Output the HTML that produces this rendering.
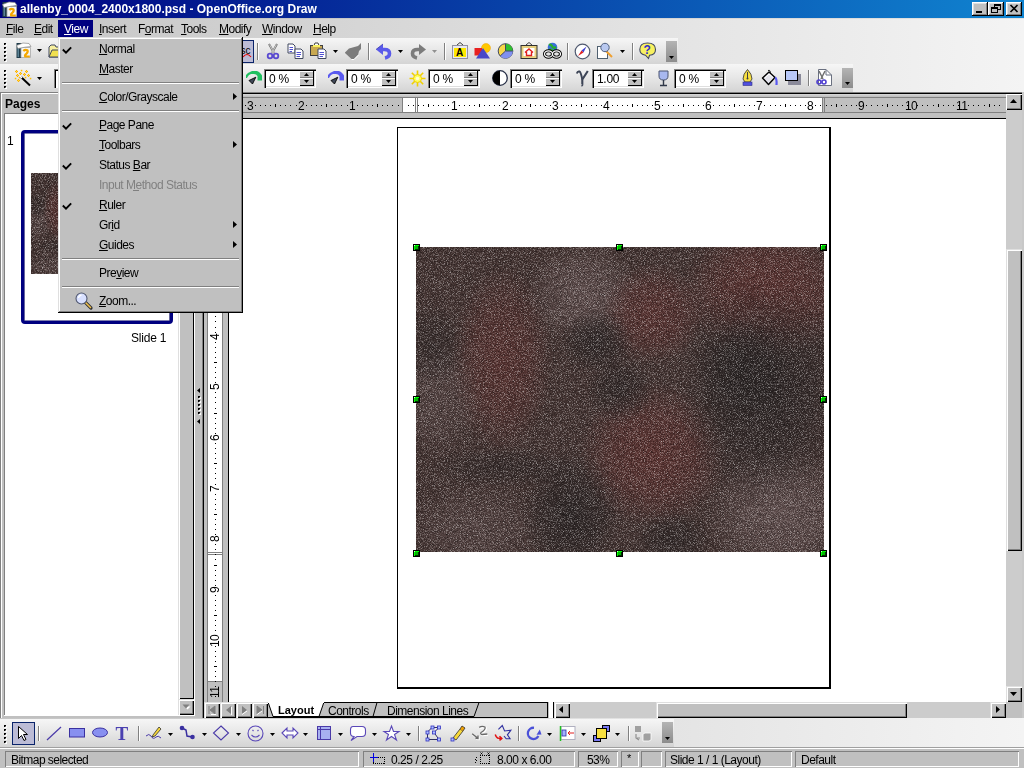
<!DOCTYPE html><html><head><meta charset="utf-8"><style>
html,body{margin:0;padding:0;}
body{width:1024px;height:768px;overflow:hidden;position:relative;background:#c0c0c0;font-family:"Liberation Sans",sans-serif;}
div{box-sizing:border-box;}
.t{position:absolute;white-space:nowrap;line-height:1;will-change:transform;}
.u{text-decoration:underline;text-underline-offset:1px;}
svg{position:absolute;overflow:visible;}
</style></head><body>

<div style="position:absolute;left:0px;top:0px;width:1024px;height:18px;background:linear-gradient(to right,#000080 0%,#1084d0 100%);"></div>
<svg style="left:1px;top:1px" width="17" height="17" viewBox="0 0 17 17"><rect x="1.5" y="1" width="5" height="15" fill="#203c4a"/><rect x="2.5" y="3" width="1.5" height="12" fill="#5a8294"/><path d="M6 5.5 H15.5 V15.5 H6 Z" fill="#f6f6f6" stroke="#a8a8a8" stroke-width="0.8"/><path d="M1.5 3.5 L8 1 L14 1.5 L16 4.5 L10 5.2 L3 6.5 Z" fill="#fff" stroke="#8a8a8a" stroke-width="0.7"/><path d="M8.3 9 Q10 7.3 12.3 8.2 Q13.5 10 11.2 12 Q9.3 13.3 10.3 14.5 H14.8" stroke="#f5a800" stroke-width="2.2" fill="none"/></svg>
<div class="t" style="left:20px;top:3px;font-size:12px;font-weight:700;color:#fff;letter-spacing:0px;">allenby_0004_2400x1800.psd - OpenOffice.org Draw</div>
<div style="position:absolute;left:972px;top:2px;width:16px;height:14px;background:#c0c0c0;box-shadow:inset -1px -1px 0 #000, inset 1px 1px 0 #fff, inset -2px -2px 0 #808080, inset 2px 2px 0 #dfdfdf;"></div>
<div style="position:absolute;left:988px;top:2px;width:16px;height:14px;background:#c0c0c0;box-shadow:inset -1px -1px 0 #000, inset 1px 1px 0 #fff, inset -2px -2px 0 #808080, inset 2px 2px 0 #dfdfdf;"></div>
<div style="position:absolute;left:1006px;top:2px;width:16px;height:14px;background:#c0c0c0;box-shadow:inset -1px -1px 0 #000, inset 1px 1px 0 #fff, inset -2px -2px 0 #808080, inset 2px 2px 0 #dfdfdf;"></div>
<div style="position:absolute;left:976px;top:11px;width:6px;height:2px;background:#000;"></div>
<svg style="left:991px;top:4px" width="10" height="10"><rect x="3.5" y="0.5" width="6" height="5" fill="none" stroke="#000"/><rect x="3" y="0" width="7" height="2" fill="#000"/><rect x="0.5" y="3.5" width="6" height="5" fill="#c0c0c0" stroke="#000"/><rect x="0" y="3" width="7" height="2" fill="#000"/></svg>
<svg style="left:1010px;top:5px" width="8" height="7"><path d="M0.5 0 L7.5 7 M7.5 0 L0.5 7" stroke="#000" stroke-width="1.6"/></svg>
<div style="position:absolute;left:0px;top:18px;width:1024px;height:74px;background:linear-gradient(to right,#c4c4c4 0%,#d6d6d6 35%,#e6e6e6 70%,#f4f4f4 100%);"></div>
<div style="position:absolute;left:0px;top:18px;width:1024px;height:1px;background:linear-gradient(to right,#b8b8b8,#e4e4e4);"></div>
<div style="position:absolute;left:58px;top:20px;width:35px;height:17px;background:#000080;"></div>
<div class="t" style="left:6px;top:23px;font-size:12px;font-weight:400;color:#000;letter-spacing:-0.5px;"><span class="u">F</span>ile</div>
<div class="t" style="left:34px;top:23px;font-size:12px;font-weight:400;color:#000;letter-spacing:-0.5px;"><span class="u">E</span>dit</div>
<div class="t" style="left:64px;top:23px;font-size:12px;font-weight:400;color:#fff;letter-spacing:-0.5px;"><span class="u">V</span>iew</div>
<div class="t" style="left:99px;top:23px;font-size:12px;font-weight:400;color:#000;letter-spacing:-0.5px;"><span class="u">I</span>nsert</div>
<div class="t" style="left:138px;top:23px;font-size:12px;font-weight:400;color:#000;letter-spacing:-0.5px;">F<span class="u">o</span>rmat</div>
<div class="t" style="left:181px;top:23px;font-size:12px;font-weight:400;color:#000;letter-spacing:-0.5px;"><span class="u">T</span>ools</div>
<div class="t" style="left:219px;top:23px;font-size:12px;font-weight:400;color:#000;letter-spacing:-0.5px;"><span class="u">M</span>odify</div>
<div class="t" style="left:262px;top:23px;font-size:12px;font-weight:400;color:#000;letter-spacing:-0.5px;"><span class="u">W</span>indow</div>
<div class="t" style="left:313px;top:23px;font-size:12px;font-weight:400;color:#000;letter-spacing:-0.5px;"><span class="u">H</span>elp</div>
<div style="position:absolute;left:0px;top:38px;width:678px;height:26px;background:linear-gradient(to bottom,#f6f6f6 0%,#e8e8e8 45%,#d4d4d4 100%);"></div>
<div style="position:absolute;left:0px;top:64px;width:853px;height:28px;background:linear-gradient(to bottom,#f6f6f6 0%,#e8e8e8 45%,#d4d4d4 100%);"></div>
<div style="position:absolute;left:5px;top:44px;width:2px;height:2px;background:#fff;"></div>
<div style="position:absolute;left:4px;top:43px;width:2px;height:2px;background:#000;"></div>
<div style="position:absolute;left:5px;top:44px;width:1px;height:1px;background:#707070;"></div>
<div style="position:absolute;left:5px;top:48px;width:2px;height:2px;background:#fff;"></div>
<div style="position:absolute;left:4px;top:47px;width:2px;height:2px;background:#000;"></div>
<div style="position:absolute;left:5px;top:48px;width:1px;height:1px;background:#707070;"></div>
<div style="position:absolute;left:5px;top:52px;width:2px;height:2px;background:#fff;"></div>
<div style="position:absolute;left:4px;top:51px;width:2px;height:2px;background:#000;"></div>
<div style="position:absolute;left:5px;top:52px;width:1px;height:1px;background:#707070;"></div>
<div style="position:absolute;left:5px;top:56px;width:2px;height:2px;background:#fff;"></div>
<div style="position:absolute;left:4px;top:55px;width:2px;height:2px;background:#000;"></div>
<div style="position:absolute;left:5px;top:56px;width:1px;height:1px;background:#707070;"></div>
<div style="position:absolute;left:5px;top:60px;width:2px;height:2px;background:#fff;"></div>
<div style="position:absolute;left:4px;top:59px;width:2px;height:2px;background:#000;"></div>
<div style="position:absolute;left:5px;top:60px;width:1px;height:1px;background:#707070;"></div>
<div style="position:absolute;left:5px;top:71px;width:2px;height:2px;background:#fff;"></div>
<div style="position:absolute;left:4px;top:70px;width:2px;height:2px;background:#000;"></div>
<div style="position:absolute;left:5px;top:71px;width:1px;height:1px;background:#707070;"></div>
<div style="position:absolute;left:5px;top:75px;width:2px;height:2px;background:#fff;"></div>
<div style="position:absolute;left:4px;top:74px;width:2px;height:2px;background:#000;"></div>
<div style="position:absolute;left:5px;top:75px;width:1px;height:1px;background:#707070;"></div>
<div style="position:absolute;left:5px;top:79px;width:2px;height:2px;background:#fff;"></div>
<div style="position:absolute;left:4px;top:78px;width:2px;height:2px;background:#000;"></div>
<div style="position:absolute;left:5px;top:79px;width:1px;height:1px;background:#707070;"></div>
<div style="position:absolute;left:5px;top:83px;width:2px;height:2px;background:#fff;"></div>
<div style="position:absolute;left:4px;top:82px;width:2px;height:2px;background:#000;"></div>
<div style="position:absolute;left:5px;top:83px;width:1px;height:1px;background:#707070;"></div>
<div style="position:absolute;left:5px;top:87px;width:2px;height:2px;background:#fff;"></div>
<div style="position:absolute;left:4px;top:86px;width:2px;height:2px;background:#000;"></div>
<div style="position:absolute;left:5px;top:87px;width:1px;height:1px;background:#707070;"></div>
<svg style="left:15px;top:42px" width="17" height="17" viewBox="0 0 17 17"><rect x="1.5" y="1" width="5" height="15" fill="#203c4a"/><rect x="2.5" y="3" width="1.5" height="12" fill="#5a8294"/><path d="M6 5.5 H15.5 V15.5 H6 Z" fill="#f6f6f6" stroke="#a8a8a8" stroke-width="0.8"/><path d="M1.5 3.5 L8 1 L14 1.5 L16 4.5 L10 5.2 L3 6.5 Z" fill="#fff" stroke="#8a8a8a" stroke-width="0.7"/><path d="M8.3 9 Q10 7.3 12.3 8.2 Q13.5 10 11.2 12 Q9.3 13.3 10.3 14.5 H14.8" stroke="#f5a800" stroke-width="2.2" fill="none"/></svg>
<svg style="left:37px;top:49px" width="5" height="3"><path d="M0 0 H5 L2.5 3 Z" fill="#000"/></svg>
<svg style="left:48px;top:44px" width="17" height="14" viewBox="0 0 17 14"><path d="M1 3 L3 1 H7 L8 3 H14 V13 H1 Z" fill="#f8f0a0" stroke="#404860" stroke-width="1"/>
<path d="M1 13 L4 6 H16 L13 13 Z" fill="#f0e050" stroke="#404860" stroke-width="1"/></svg>
<div style="position:absolute;left:226px;top:40px;width:28px;height:23px;background:#bcbcd6;border:1px solid #0a246a;"></div>
<svg style="left:242px;top:46px" width="11" height="12" viewBox="0 0 11 12"><text x="-1.5" y="7.5" font-family="Liberation Sans" font-size="10" font-weight="400" fill="#000">sc</text>
<path d="M1 11 Q5 6 9 11" stroke="#e00000" stroke-width="1.2" fill="none"/></svg>
<div style="position:absolute;left:257px;top:43px;width:1px;height:17px;background:#808080;"></div>
<div style="position:absolute;left:258px;top:43px;width:1px;height:17px;background:#fff;"></div>
<svg style="left:265px;top:43px" width="16" height="16" viewBox="0 0 16 16"><path d="M4 1 L9 10 M12 1 L7 10" stroke="#707070" stroke-width="2" fill="none"/>
<path d="M4.5 1.5 L9 10 M11.5 1.5 L7 10" stroke="#e0e0e0" stroke-width="0.8" fill="none"/>
<circle cx="5" cy="13" r="2.3" fill="none" stroke="#5a4ad0" stroke-width="1.8"/><circle cx="11" cy="13" r="2.3" fill="none" stroke="#5a4ad0" stroke-width="1.8"/></svg>
<svg style="left:287px;top:43px" width="18" height="16" viewBox="0 0 18 16"><path d="M1 1 H6 L8 3 V10 H1 Z" fill="#fff" stroke="#404860"/><path d="M2.5 4.5 H6 M2.5 6.5 H6 M2.5 8.5 H5" stroke="#5050d0"/>
<path d="M8 6 H14 L16 8 V15.5 H8 Z" fill="#fff" stroke="#404860"/><path d="M9.5 9.5 H14 M9.5 11.5 H14 M9.5 13.5 H13" stroke="#5050d0"/></svg>
<svg style="left:310px;top:42px" width="18" height="17" viewBox="0 0 18 17"><rect x="0.5" y="3.5" width="12" height="10" fill="#c8a850" stroke="#404040"/><path d="M4 3.5 L5 1 H8 L9 3.5 Z" fill="#fff" stroke="#404040"/><rect x="3" y="3" width="7" height="2" fill="#f8f060"/>
<path d="M8 7 H14 L16 9 V16.5 H8 Z" fill="#fff" stroke="#404860"/><path d="M9.5 10.5 H14 M9.5 12.5 H14 M9.5 14.5 H13" stroke="#5050d0"/></svg>
<svg style="left:333px;top:50px" width="5" height="3"><path d="M0 0 H5 L2.5 3 Z" fill="#000"/></svg>
<svg style="left:344px;top:43px" width="18" height="17" viewBox="0 0 18 17"><path d="M1 9.5 L5 5.5 L14 3 L17 0 L17 6 L15 8 L14 12 L10 16 L7.5 16 L1 10 Z" fill="#7c7c7c"/><path d="M7.5 16.5 L10 16.5 L14.5 12" stroke="#fff" stroke-width="1" fill="none"/></svg>
<div style="position:absolute;left:368px;top:43px;width:1px;height:17px;background:#808080;"></div>
<div style="position:absolute;left:369px;top:43px;width:1px;height:17px;background:#fff;"></div>
<svg style="left:375px;top:43px" width="18" height="17" viewBox="0 0 18 17"><path d="M1 6.5 L8 1 V12 Z" fill="#5a5aea"/><path d="M6 6.5 H9.5 Q14.5 6.5 14.5 10.5 Q14.5 14 10 15" stroke="#5a5aea" stroke-width="3.6" fill="none"/><path d="M1 6.5 L8 1" stroke="#3838b0" stroke-width="0.8"/></svg>
<svg style="left:398px;top:50px" width="5" height="3"><path d="M0 0 H5 L2.5 3 Z" fill="#000"/></svg>
<svg style="left:409px;top:43px" width="18" height="17" viewBox="0 0 18 17"><path d="M17 6.5 L10 1 V12 Z" fill="#7c7c7c"/><path d="M12 6.5 H8.5 Q3.5 6.5 3.5 10.5 Q3.5 14 8 15" stroke="#7c7c7c" stroke-width="3.6" fill="none"/></svg>
<svg style="left:432px;top:50px" width="5" height="3"><path d="M0 0 H5 L2.5 3 Z" fill="#909090"/></svg>
<div style="position:absolute;left:444px;top:43px;width:1px;height:17px;background:#808080;"></div>
<div style="position:absolute;left:445px;top:43px;width:1px;height:17px;background:#fff;"></div>
<svg style="left:451px;top:42px" width="18" height="18" viewBox="0 0 18 18"><path d="M6 3 L9 0.5 L12 3" stroke="#404040" fill="none"/><rect x="1.5" y="3.5" width="15" height="13" fill="#e8e8f0" stroke="#9090a0"/><rect x="3" y="6" width="12" height="9" fill="#ffe800"/><text x="5" y="14" font-family="Liberation Sans" font-size="10" font-weight="700" fill="#000">A</text></svg>
<svg style="left:474px;top:43px" width="18" height="16" viewBox="0 0 18 16"><circle cx="12" cy="5" r="4.5" fill="#ffc800" stroke="#f0a000" stroke-width="0.5"/><rect x="0.5" y="5" width="7.5" height="7.5" fill="#e82020"/><path d="M9 5 L16 15.5 H2 Z" fill="#4848c8"/></svg>
<svg style="left:497px;top:43px" width="18" height="16" viewBox="0 0 18 16"><circle cx="8.5" cy="8" r="7.3" fill="#f8d848" stroke="#404860"/><path d="M8.5 8 V0.7 A7.3 7.3 0 0 1 15.8 8 Z" fill="#30c030"/><path d="M8.5 8 H15.8 A7.3 7.3 0 0 1 3.2 13 Z" fill="#8090f0"/><path d="M8.5 0.7 V8 L3.2 13 M8.5 8 H15.8" stroke="#404860" fill="none"/></svg>
<svg style="left:520px;top:42px" width="18" height="17" viewBox="0 0 18 17"><path d="M6 3 L9 0.5 L12 3" stroke="#404040" fill="none"/><rect x="1" y="3.5" width="16" height="13" fill="#e8d080" stroke="#303030"/><rect x="3.5" y="6" width="11" height="8" fill="#fff"/><path d="M5 10.5 L9 7 L13 10.5 M6.5 10 V13.5 H11.5 V10" stroke="#e02020" stroke-width="1.4" fill="none"/></svg>
<svg style="left:543px;top:42px" width="20" height="17" viewBox="0 0 20 17"><circle cx="9.5" cy="5.5" r="4.8" fill="#3a70d8"/><path d="M6 3 Q8 2 9 4 Q10 7 13 5 M6 8 Q8 7 10 9" stroke="#28b028" stroke-width="2.2" fill="none"/><g fill="none"><ellipse cx="5.5" cy="12" rx="4" ry="3.2" stroke="#000" stroke-width="3"/><ellipse cx="13.5" cy="12" rx="4" ry="3.2" stroke="#000" stroke-width="3"/><ellipse cx="5.5" cy="12" rx="4" ry="3.2" stroke="#fff" stroke-width="1.2"/><ellipse cx="13.5" cy="12" rx="4" ry="3.2" stroke="#fff" stroke-width="1.2"/></g></svg>
<div style="position:absolute;left:567px;top:43px;width:1px;height:17px;background:#808080;"></div>
<div style="position:absolute;left:568px;top:43px;width:1px;height:17px;background:#fff;"></div>
<svg style="left:574px;top:43px" width="17" height="17" viewBox="0 0 17 17"><circle cx="8.5" cy="8.5" r="7.3" fill="#fff" stroke="#505a70" stroke-width="1.2"/><path d="M12.5 3.5 L9.5 9.5 L7.5 7.5 Z" fill="#4040d0"/><path d="M4 13 L7.5 7.5 L9.5 9.5 Z" fill="#e02020"/></svg>
<svg style="left:597px;top:42px" width="18" height="17" viewBox="0 0 18 17"><rect x="0.5" y="4.5" width="10" height="12" fill="#fff" stroke="#506070"/><path d="M9 9 L15 15" stroke="#f0a030" stroke-width="2"/><circle cx="8" cy="5.5" r="4.2" fill="#b8c8f0" stroke="#506080" stroke-width="1"/></svg>
<svg style="left:620px;top:50px" width="5" height="3"><path d="M0 0 H5 L2.5 3 Z" fill="#000"/></svg>
<div style="position:absolute;left:632px;top:43px;width:1px;height:17px;background:#808080;"></div>
<div style="position:absolute;left:633px;top:43px;width:1px;height:17px;background:#fff;"></div>
<svg style="left:639px;top:42px" width="18" height="18" viewBox="0 0 18 18"><path d="M8.5 1 Q16.5 1 16.5 7.5 Q16.5 13 10.5 13.3 L9.5 16.5 L6.5 13.2 Q0.8 12.3 0.8 7.5 Q0.8 1 8.5 1 Z" fill="#f8f060" stroke="#404860" stroke-width="1.1"/><text x="4.6" y="12" font-family="Liberation Sans" font-size="12" font-weight="700" fill="#3030c8">?</text></svg>
<div style="position:absolute;left:666px;top:41px;width:11px;height:21px;background:linear-gradient(to bottom,#b4b4b4,#8c8c8c);"></div>
<svg style="left:669px;top:56px" width="5" height="3" viewBox="0 0 5 3"><path d="M0 0 H5 L2.5 3 Z" fill="#000"/></svg>
<svg style="left:14px;top:69px" width="18" height="18" viewBox="0 0 18 18"><path d="M2.5 1 V4 M1 2.5 H4" stroke="#ffb000" stroke-width="1.2"/><rect x="2" y="2" width="1" height="1" fill="#ffe040"/><path d="M12.5 1 V4 M11 2.5 H14" stroke="#ffb000" stroke-width="1.2"/><rect x="12" y="2" width="1" height="1" fill="#ffe040"/><path d="M6.5 3 V6 M5 4.5 H8" stroke="#ffb000" stroke-width="1.2"/><rect x="6" y="4" width="1" height="1" fill="#ffe040"/><path d="M10.5 4 V7 M9 5.5 H12" stroke="#ffb000" stroke-width="1.2"/><rect x="10" y="5" width="1" height="1" fill="#ffe040"/><path d="M3.5 5 V8 M2 6.5 H5" stroke="#ffb000" stroke-width="1.2"/><rect x="3" y="6" width="1" height="1" fill="#ffe040"/><path d="M14.5 5 V8 M13 6.5 H16" stroke="#ffb000" stroke-width="1.2"/><rect x="14" y="6" width="1" height="1" fill="#ffe040"/><path d="M4.5 10 V13 M3 11.5 H6" stroke="#ffb000" stroke-width="1.2"/><rect x="4" y="11" width="1" height="1" fill="#ffe040"/><rect x="6.8" y="0.8" width="1.5" height="1.5" fill="#ffc000"/><rect x="4.8" y="7.8" width="1.5" height="1.5" fill="#ffc000"/><rect x="10.8" y="7.8" width="1.5" height="1.5" fill="#ffc000"/><rect x="0.8" y="8.8" width="1.5" height="1.5" fill="#ffc000"/><rect x="15.8" y="8.8" width="1.5" height="1.5" fill="#ffc000"/><path d="M7 8 L16 16.5" stroke="#000" stroke-width="2"/><path d="M6.3 7.3 L8 9" stroke="#fff" stroke-width="1.5"/></svg>
<svg style="left:37px;top:77px" width="5" height="3"><path d="M0 0 H5 L2.5 3 Z" fill="#000"/></svg>
<div style="position:absolute;left:54px;top:69px;width:20px;height:19px;background:#fff;box-shadow:inset 1px 1px 0 #808080, inset 2px 2px 0 #000;"></div>
<div style="position:absolute;left:264px;top:69px;width:52px;height:19px;background:#fff;box-shadow:inset 1px 1px 0 #808080, inset 2px 2px 0 #000, inset -1px -1px 0 #fff, inset -2px -2px 0 #dfdfdf;"></div>
<div class="t" style="left:269px;top:73px;font-size:12px;font-weight:400;color:#000;letter-spacing:-0.3px;">0 %</div>
<div style="position:absolute;left:299px;top:71px;width:15px;height:7px;background:#c0c0c0;box-shadow:inset 1px 1px 0 #fff, inset -1px -1px 0 #808080;"></div>
<div style="position:absolute;left:299px;top:78px;width:15px;height:8px;background:#c0c0c0;box-shadow:inset 1px 1px 0 #fff, inset -1px -1px 0 #000;"></div>
<div style="position:absolute;left:313px;top:70px;width:1px;height:16px;background:#000;"></div>
<svg style="left:304px;top:73px" width="5" height="3" viewBox="0 0 5 3"><path d="M2.5 0 L5 3 H0 Z" fill="#000"/></svg>
<svg style="left:304px;top:80px" width="5" height="3" viewBox="0 0 5 3"><path d="M0 0 H5 L2.5 3 Z" fill="#000"/></svg>
<div style="position:absolute;left:346px;top:69px;width:52px;height:19px;background:#fff;box-shadow:inset 1px 1px 0 #808080, inset 2px 2px 0 #000, inset -1px -1px 0 #fff, inset -2px -2px 0 #dfdfdf;"></div>
<div class="t" style="left:351px;top:73px;font-size:12px;font-weight:400;color:#000;letter-spacing:-0.3px;">0 %</div>
<div style="position:absolute;left:381px;top:71px;width:15px;height:7px;background:#c0c0c0;box-shadow:inset 1px 1px 0 #fff, inset -1px -1px 0 #808080;"></div>
<div style="position:absolute;left:381px;top:78px;width:15px;height:8px;background:#c0c0c0;box-shadow:inset 1px 1px 0 #fff, inset -1px -1px 0 #000;"></div>
<div style="position:absolute;left:395px;top:70px;width:1px;height:16px;background:#000;"></div>
<svg style="left:386px;top:73px" width="5" height="3" viewBox="0 0 5 3"><path d="M2.5 0 L5 3 H0 Z" fill="#000"/></svg>
<svg style="left:386px;top:80px" width="5" height="3" viewBox="0 0 5 3"><path d="M0 0 H5 L2.5 3 Z" fill="#000"/></svg>
<div style="position:absolute;left:428px;top:69px;width:52px;height:19px;background:#fff;box-shadow:inset 1px 1px 0 #808080, inset 2px 2px 0 #000, inset -1px -1px 0 #fff, inset -2px -2px 0 #dfdfdf;"></div>
<div class="t" style="left:433px;top:73px;font-size:12px;font-weight:400;color:#000;letter-spacing:-0.3px;">0 %</div>
<div style="position:absolute;left:463px;top:71px;width:15px;height:7px;background:#c0c0c0;box-shadow:inset 1px 1px 0 #fff, inset -1px -1px 0 #808080;"></div>
<div style="position:absolute;left:463px;top:78px;width:15px;height:8px;background:#c0c0c0;box-shadow:inset 1px 1px 0 #fff, inset -1px -1px 0 #000;"></div>
<div style="position:absolute;left:477px;top:70px;width:1px;height:16px;background:#000;"></div>
<svg style="left:468px;top:73px" width="5" height="3" viewBox="0 0 5 3"><path d="M2.5 0 L5 3 H0 Z" fill="#000"/></svg>
<svg style="left:468px;top:80px" width="5" height="3" viewBox="0 0 5 3"><path d="M0 0 H5 L2.5 3 Z" fill="#000"/></svg>
<div style="position:absolute;left:510px;top:69px;width:52px;height:19px;background:#fff;box-shadow:inset 1px 1px 0 #808080, inset 2px 2px 0 #000, inset -1px -1px 0 #fff, inset -2px -2px 0 #dfdfdf;"></div>
<div class="t" style="left:515px;top:73px;font-size:12px;font-weight:400;color:#000;letter-spacing:-0.3px;">0 %</div>
<div style="position:absolute;left:545px;top:71px;width:15px;height:7px;background:#c0c0c0;box-shadow:inset 1px 1px 0 #fff, inset -1px -1px 0 #808080;"></div>
<div style="position:absolute;left:545px;top:78px;width:15px;height:8px;background:#c0c0c0;box-shadow:inset 1px 1px 0 #fff, inset -1px -1px 0 #000;"></div>
<div style="position:absolute;left:559px;top:70px;width:1px;height:16px;background:#000;"></div>
<svg style="left:550px;top:73px" width="5" height="3" viewBox="0 0 5 3"><path d="M2.5 0 L5 3 H0 Z" fill="#000"/></svg>
<svg style="left:550px;top:80px" width="5" height="3" viewBox="0 0 5 3"><path d="M0 0 H5 L2.5 3 Z" fill="#000"/></svg>
<div style="position:absolute;left:592px;top:69px;width:52px;height:19px;background:#fff;box-shadow:inset 1px 1px 0 #808080, inset 2px 2px 0 #000, inset -1px -1px 0 #fff, inset -2px -2px 0 #dfdfdf;"></div>
<div class="t" style="left:597px;top:73px;font-size:12px;font-weight:400;color:#000;letter-spacing:-0.3px;">1.00</div>
<div style="position:absolute;left:627px;top:71px;width:15px;height:7px;background:#c0c0c0;box-shadow:inset 1px 1px 0 #fff, inset -1px -1px 0 #808080;"></div>
<div style="position:absolute;left:627px;top:78px;width:15px;height:8px;background:#c0c0c0;box-shadow:inset 1px 1px 0 #fff, inset -1px -1px 0 #000;"></div>
<div style="position:absolute;left:641px;top:70px;width:1px;height:16px;background:#000;"></div>
<svg style="left:632px;top:73px" width="5" height="3" viewBox="0 0 5 3"><path d="M2.5 0 L5 3 H0 Z" fill="#000"/></svg>
<svg style="left:632px;top:80px" width="5" height="3" viewBox="0 0 5 3"><path d="M0 0 H5 L2.5 3 Z" fill="#000"/></svg>
<div style="position:absolute;left:674px;top:69px;width:52px;height:19px;background:#fff;box-shadow:inset 1px 1px 0 #808080, inset 2px 2px 0 #000, inset -1px -1px 0 #fff, inset -2px -2px 0 #dfdfdf;"></div>
<div class="t" style="left:679px;top:73px;font-size:12px;font-weight:400;color:#000;letter-spacing:-0.3px;">0 %</div>
<div style="position:absolute;left:709px;top:71px;width:15px;height:7px;background:#c0c0c0;box-shadow:inset 1px 1px 0 #fff, inset -1px -1px 0 #808080;"></div>
<div style="position:absolute;left:709px;top:78px;width:15px;height:8px;background:#c0c0c0;box-shadow:inset 1px 1px 0 #fff, inset -1px -1px 0 #000;"></div>
<div style="position:absolute;left:723px;top:70px;width:1px;height:16px;background:#000;"></div>
<svg style="left:714px;top:73px" width="5" height="3" viewBox="0 0 5 3"><path d="M2.5 0 L5 3 H0 Z" fill="#000"/></svg>
<svg style="left:714px;top:80px" width="5" height="3" viewBox="0 0 5 3"><path d="M0 0 H5 L2.5 3 Z" fill="#000"/></svg>
<svg style="left:242px;top:66px" width="24" height="24" viewBox="0 0 24 24"><path d="M4 12 L4 9 L6 7 L8 6 L10 5 L15 5 L17 6 L19 8 L20 9.5 L20 14.5 L15.5 14.5 L15.5 10 L14 8.5 L12 8 L9 8 L7 9 L5.5 11 L5 12 Z" fill="#20c060"/>
<path d="M7 14.5 L13.8 11.2 L10.5 18 Z" fill="#404858" stroke="#000" stroke-width="0.9" stroke-linejoin="round"/></svg>
<svg style="left:324px;top:66px" width="24" height="24" viewBox="0 0 24 24"><path d="M4 12 L4 9 L6 7 L8 6 L10 5 L15 5 L17 6 L19 8 L20 9.5 L20 14.5 L15.5 14.5 L15.5 10 L14 8.5 L12 8 L9 8 L7 9 L5.5 11 L5 12 Z" fill="#5a5af0"/>
<path d="M7 14.5 L13.8 11.2 L10.5 18 Z" fill="#404858" stroke="#000" stroke-width="0.9" stroke-linejoin="round"/></svg>
<svg style="left:409px;top:70px" width="17" height="17" viewBox="0 0 17 17"><g stroke="#f0d000" stroke-width="1.6"><path d="M8.5 0.5 V16.5 M0.5 8.5 H16.5 M2.8 2.8 L14.2 14.2 M14.2 2.8 L2.8 14.2"/></g><circle cx="8.5" cy="8.5" r="4" fill="#ffff60" stroke="#f0d000"/><circle cx="8.5" cy="8.5" r="1.8" fill="#ffffd0"/></svg>
<svg style="left:491px;top:69px" width="18" height="18" viewBox="0 0 18 18"><circle cx="9" cy="9" r="7.3" fill="#fff" stroke="#283048" stroke-width="1.3"/><path d="M9 1.7 A7.3 7.3 0 0 0 9 16.3 Z" fill="#000"/></svg>
<svg style="left:576px;top:69px" width="13" height="18" viewBox="0 0 13 18"><path d="M0.8 4.5 Q1.5 2 3.5 2.5 Q4.8 3 6.3 10.5" stroke="#3c4456" stroke-width="1.9" fill="none"/><path d="M11.8 2 L6.3 10.5 V15.2 Q6.3 16.8 5.6 16.2" stroke="#3c4456" stroke-width="2.1" fill="none"/></svg>
<svg style="left:658px;top:70px" width="11" height="17" viewBox="0 0 11 17"><path d="M1 1 H10 V6 Q10 10 5.5 10 Q1 10 1 6 Z" fill="#a8b8f0" stroke="#4a5470"/><path d="M5.5 10 V15 M2 15.5 H9" stroke="#303848" stroke-width="1.4"/></svg>
<svg style="left:741px;top:69px" width="13" height="18" viewBox="0 0 13 18"><path d="M6.5 0.5 Q11 5 11 10 L9 13 H4 L2 10 Q2 5 6.5 0.5 Z" fill="#f8e040" stroke="#404040" stroke-width="0.9"/><path d="M6.5 3 V9" stroke="#404040"/><circle cx="6.5" cy="9.5" r="1" fill="#404040"/><rect x="2" y="13" width="9" height="3.5" fill="#5050e0" stroke="#303080" stroke-width="0.6"/></svg>
<svg style="left:761px;top:69px" width="18" height="18" viewBox="0 0 18 18"><path d="M7 1.5 Q10 0.5 9 5" stroke="#202020" stroke-width="1" fill="none"/><path d="M1.5 9 L8 3 L14 8.5 L7.5 15.5 Z" fill="#e4e4ec" stroke="#000" stroke-width="1.4" stroke-linejoin="round"/><path d="M4 9 L8 5 L12 8.5" fill="none" stroke="#fff" stroke-width="1"/><path d="M14 8.5 Q16 9.5 15.5 16" stroke="#5a5af0" stroke-width="2.2" fill="none"/></svg>
<svg style="left:785px;top:70px" width="17" height="16" viewBox="0 0 17 16"><rect x="3" y="4" width="13" height="11" fill="#8a8a9a"/><rect x="0.5" y="0.5" width="12" height="10" fill="#b8c8f8" stroke="#000"/></svg>
<div style="position:absolute;left:808px;top:70px;width:1px;height:16px;background:#808080;"></div>
<div style="position:absolute;left:809px;top:70px;width:1px;height:16px;background:#fff;"></div>
<svg style="left:815px;top:69px" width="18" height="18" viewBox="0 0 18 18"><path d="M3.5 0.5 H11 L16.5 6 V16.5 H3.5 Z" fill="#fff" stroke="#6a7080"/><path d="M11 0.5 V6 H16.5" fill="none" stroke="#6a7080"/>
<path d="M4 2 L8 10 M10 2 L6 10" stroke="#707070" stroke-width="1.5"/><circle cx="4" cy="13" r="2" fill="none" stroke="#5040d0" stroke-width="1.6"/><circle cx="9" cy="13" r="2" fill="none" stroke="#5040d0" stroke-width="1.6"/></svg>
<div style="position:absolute;left:842px;top:68px;width:11px;height:20px;background:linear-gradient(to bottom,#b4b4b4,#8c8c8c);"></div>
<svg style="left:845px;top:82px" width="5" height="3" viewBox="0 0 5 3"><path d="M0 0 H5 L2.5 3 Z" fill="#000"/></svg>
<div style="position:absolute;left:0px;top:92px;width:203px;height:627px;background:#c0c0c0;"></div>
<div style="position:absolute;left:0px;top:92px;width:195px;height:1px;background:#808080;"></div>
<div style="position:absolute;left:0px;top:92px;width:1px;height:627px;background:#808080;"></div>
<div style="position:absolute;left:1px;top:93px;width:194px;height:1px;background:#fff;"></div>
<div style="position:absolute;left:1px;top:93px;width:1px;height:625px;background:#fff;"></div>
<div class="t" style="left:5px;top:98px;font-size:12px;font-weight:700;color:#000;letter-spacing:0px;">Pages</div>
<div style="position:absolute;left:4px;top:113px;width:191px;height:603px;background:#fff;box-shadow:inset 1px 1px 0 #808080;"></div>
<div style="position:absolute;left:4px;top:715px;width:191px;height:1px;background:#fff;"></div>
<div style="position:absolute;left:194px;top:113px;width:1px;height:603px;background:#fff;"></div>
<div style="position:absolute;left:0px;top:718px;width:203px;height:1px;background:#808080;"></div>
<div style="position:absolute;left:178px;top:114px;width:16px;height:585px;background:#c0c0c0;box-shadow:inset 1px 1px 0 #dfdfdf, inset 2px 2px 0 #fff, inset -1px -1px 0 #000;"></div>
<div style="position:absolute;left:178px;top:699px;width:16px;height:16px;background:#c0c0c0;box-shadow:inset 1px 1px 0 #dfdfdf, inset 2px 2px 0 #fff, inset -1px -1px 0 #000, inset -2px -2px 0 #808080;"></div>
<svg style="left:182px;top:704px" width="9" height="6" viewBox="0 0 9 6"><path d="M1.5 1.5 H7.5 L4.5 4.5 Z" fill="#fff" transform="translate(1,1)"/><path d="M0.5 0.5 H7.5 L4 4.5 Z" fill="#808080"/></svg>
<div class="t" style="left:7px;top:135px;font-size:12px;font-weight:400;color:#000;letter-spacing:0px;">1</div>
<div style="position:absolute;left:21px;top:130px;width:152px;height:194px;border:3px solid #000080;border-radius:4px;background:#fff;box-shadow:inset 0 0 0 0.6px #000060;"></div>
<svg style="left:31px;top:173px" width="135" height="101" viewBox="0 0 135 101"><defs><radialGradient id="gr2"><stop offset="0" stop-color="#643432" stop-opacity="0.75"/><stop offset="0.55" stop-color="#643432" stop-opacity="0.5"/><stop offset="1" stop-color="#643432" stop-opacity="0"/></radialGradient><radialGradient id="gl2"><stop offset="0" stop-color="#726060" stop-opacity="0.7"/><stop offset="0.55" stop-color="#726060" stop-opacity="0.45"/><stop offset="1" stop-color="#726060" stop-opacity="0"/></radialGradient><radialGradient id="gd2"><stop offset="0" stop-color="#2a2525" stop-opacity="0.8"/><stop offset="0.55" stop-color="#2a2525" stop-opacity="0.5"/><stop offset="1" stop-color="#2a2525" stop-opacity="0"/></radialGradient><filter id="nz2" filterUnits="userSpaceOnUse" x="0" y="0" width="135" height="101" color-interpolation-filters="sRGB"><feTurbulence type="fractalNoise" baseFrequency="1.3" numOctaves="2" seed="3" result="t"/><feColorMatrix in="t" type="matrix" values="1 0 0 0 0  1 0 0 0 0  1 0 0 0 0  0 0 0 0 1" result="g"/><feComponentTransfer in="g" result="gc"><feFuncR type="linear" slope="0.72" intercept="0.14"/><feFuncG type="linear" slope="0.72" intercept="0.14"/><feFuncB type="linear" slope="0.72" intercept="0.14"/></feComponentTransfer><feBlend in="gc" in2="SourceGraphic" mode="hard-light"/></filter></defs><g filter="url(#nz2)"><g transform="scale(0.3309)"><rect width="408" height="305" fill="#443432"/><ellipse cx="86" cy="113" rx="51" ry="94" fill="url(#gr2)" opacity="0.85"/><ellipse cx="167" cy="46" rx="57" ry="51" fill="url(#gl2)" opacity="0.85"/><ellipse cx="237" cy="67" rx="51" ry="51" fill="url(#gr2)" opacity="0.9"/><ellipse cx="351" cy="43" rx="86" ry="68" fill="url(#gr2)" opacity="1.0"/><ellipse cx="20" cy="152" rx="46" ry="60" fill="url(#gl2)" opacity="0.5"/><ellipse cx="237" cy="207" rx="74" ry="73" fill="url(#gr2)" opacity="1.0"/><ellipse cx="367" cy="268" rx="80" ry="64" fill="url(#gl2)" opacity="0.9"/><ellipse cx="61" cy="281" rx="69" ry="43" fill="url(#gl2)" opacity="0.5"/><ellipse cx="180" cy="95" rx="37" ry="32" fill="url(#gd2)" opacity="0.9"/><ellipse cx="347" cy="143" rx="86" ry="111" fill="url(#gd2)" opacity="1.0"/><ellipse cx="326" cy="122" rx="46" ry="51" fill="url(#gd2)" opacity="0.8"/><ellipse cx="204" cy="143" rx="34" ry="34" fill="url(#gd2)" opacity="0.8"/><ellipse cx="155" cy="268" rx="51" ry="64" fill="url(#gd2)" opacity="1.0"/><ellipse cx="257" cy="293" rx="40" ry="30" fill="url(#gd2)" opacity="0.8"/><ellipse cx="16" cy="98" rx="34" ry="43" fill="url(#gd2)" opacity="0.6"/><ellipse cx="90" cy="220" rx="80" ry="21" fill="url(#gd2)" opacity="0.6"/></g></g></svg>
<div class="t" style="left:131px;top:332px;font-size:12px;font-weight:400;color:#000;letter-spacing:-0.2px;">Slide 1</div>
<div style="position:absolute;left:195px;top:93px;width:8px;height:626px;background:#c0c0c0;"></div>
<div style="position:absolute;left:199px;top:397px;width:2px;height:2px;background:#fff;"></div>
<div style="position:absolute;left:198px;top:396px;width:2px;height:2px;background:#000;"></div>
<div style="position:absolute;left:199px;top:397px;width:1px;height:1px;background:#606060;"></div>
<div style="position:absolute;left:199px;top:401px;width:2px;height:2px;background:#fff;"></div>
<div style="position:absolute;left:198px;top:400px;width:2px;height:2px;background:#000;"></div>
<div style="position:absolute;left:199px;top:401px;width:1px;height:1px;background:#606060;"></div>
<div style="position:absolute;left:199px;top:405px;width:2px;height:2px;background:#fff;"></div>
<div style="position:absolute;left:198px;top:404px;width:2px;height:2px;background:#000;"></div>
<div style="position:absolute;left:199px;top:405px;width:1px;height:1px;background:#606060;"></div>
<div style="position:absolute;left:199px;top:409px;width:2px;height:2px;background:#fff;"></div>
<div style="position:absolute;left:198px;top:408px;width:2px;height:2px;background:#000;"></div>
<div style="position:absolute;left:199px;top:409px;width:1px;height:1px;background:#606060;"></div>
<div style="position:absolute;left:199px;top:413px;width:2px;height:2px;background:#fff;"></div>
<div style="position:absolute;left:198px;top:412px;width:2px;height:2px;background:#000;"></div>
<div style="position:absolute;left:199px;top:413px;width:1px;height:1px;background:#606060;"></div>
<svg style="left:197px;top:388px" width="4" height="5" viewBox="0 0 4 5"><path d="M3 0 V5 L0 2.5 Z" fill="#000"/></svg>
<svg style="left:197px;top:419px" width="4" height="5" viewBox="0 0 4 5"><path d="M3 0 V5 L0 2.5 Z" fill="#000"/></svg>
<div style="position:absolute;left:203px;top:92px;width:821px;height:1px;background:#808080;"></div>
<div style="position:absolute;left:203px;top:93px;width:819px;height:1px;background:#000;"></div>
<div style="position:absolute;left:203px;top:93px;width:1px;height:625px;background:#000;"></div>
<div style="position:absolute;left:202px;top:92px;width:1px;height:627px;background:#808080;"></div>
<div style="position:absolute;left:229px;top:119px;width:777px;height:583px;background:#fff;"></div>
<div style="position:absolute;left:204px;top:94px;width:802px;height:25px;background:#c0c0c0;"></div>
<div style="position:absolute;left:204px;top:94px;width:802px;height:1px;background:#d4d4d4;"></div>
<div style="position:absolute;left:204px;top:95px;width:802px;height:1px;background:#cacaca;"></div>
<div style="position:absolute;left:229px;top:97px;width:777px;height:1px;background:#808080;"></div>
<div style="position:absolute;left:229px;top:112px;width:777px;height:1px;background:#808080;"></div>
<div style="position:absolute;left:204px;top:118px;width:802px;height:1px;background:#000;"></div>
<div style="position:absolute;left:403px;top:98px;width:420px;height:14px;background:#fff;"></div>
<div style="position:absolute;left:402px;top:97px;width:1px;height:16px;background:#808080;"></div>
<div style="position:absolute;left:824px;top:97px;width:1px;height:16px;background:#808080;"></div>
<div style="position:absolute;left:415px;top:98px;width:1px;height:14px;background:#808080;"></div>
<div style="position:absolute;left:417px;top:98px;width:1px;height:14px;background:#808080;"></div>
<div style="position:absolute;left:822px;top:98px;width:1px;height:14px;background:#808080;"></div>
<div style="position:absolute;left:234px;top:105px;width:1px;height:1px;background:#000;"></div>
<div style="position:absolute;left:240px;top:105px;width:1px;height:1px;background:#000;"></div>
<div style="position:absolute;left:245px;top:105px;width:1px;height:1px;background:#000;"></div>
<div class="t" style="left:247px;top:100px;font-size:12px;font-weight:400;color:#000;letter-spacing:-0.6px;">3</div>
<div style="position:absolute;left:255px;top:105px;width:1px;height:1px;background:#000;"></div>
<div style="position:absolute;left:260px;top:105px;width:1px;height:1px;background:#000;"></div>
<div style="position:absolute;left:265px;top:105px;width:1px;height:1px;background:#000;"></div>
<div style="position:absolute;left:270px;top:105px;width:1px;height:1px;background:#000;"></div>
<div style="position:absolute;left:275px;top:104px;width:1px;height:3px;background:#000;"></div>
<div style="position:absolute;left:280px;top:105px;width:1px;height:1px;background:#000;"></div>
<div style="position:absolute;left:285px;top:105px;width:1px;height:1px;background:#000;"></div>
<div style="position:absolute;left:290px;top:105px;width:1px;height:1px;background:#000;"></div>
<div style="position:absolute;left:296px;top:105px;width:1px;height:1px;background:#000;"></div>
<div class="t" style="left:298px;top:100px;font-size:12px;font-weight:400;color:#000;letter-spacing:-0.6px;">2</div>
<div style="position:absolute;left:306px;top:105px;width:1px;height:1px;background:#000;"></div>
<div style="position:absolute;left:311px;top:105px;width:1px;height:1px;background:#000;"></div>
<div style="position:absolute;left:316px;top:105px;width:1px;height:1px;background:#000;"></div>
<div style="position:absolute;left:321px;top:105px;width:1px;height:1px;background:#000;"></div>
<div style="position:absolute;left:326px;top:104px;width:1px;height:3px;background:#000;"></div>
<div style="position:absolute;left:331px;top:105px;width:1px;height:1px;background:#000;"></div>
<div style="position:absolute;left:336px;top:105px;width:1px;height:1px;background:#000;"></div>
<div style="position:absolute;left:341px;top:105px;width:1px;height:1px;background:#000;"></div>
<div style="position:absolute;left:347px;top:105px;width:1px;height:1px;background:#000;"></div>
<div class="t" style="left:349px;top:100px;font-size:12px;font-weight:400;color:#000;letter-spacing:-0.6px;">1</div>
<div style="position:absolute;left:357px;top:105px;width:1px;height:1px;background:#000;"></div>
<div style="position:absolute;left:362px;top:105px;width:1px;height:1px;background:#000;"></div>
<div style="position:absolute;left:367px;top:105px;width:1px;height:1px;background:#000;"></div>
<div style="position:absolute;left:372px;top:105px;width:1px;height:1px;background:#000;"></div>
<div style="position:absolute;left:377px;top:104px;width:1px;height:3px;background:#000;"></div>
<div style="position:absolute;left:382px;top:105px;width:1px;height:1px;background:#000;"></div>
<div style="position:absolute;left:387px;top:105px;width:1px;height:1px;background:#000;"></div>
<div style="position:absolute;left:392px;top:105px;width:1px;height:1px;background:#000;"></div>
<div style="position:absolute;left:398px;top:105px;width:1px;height:1px;background:#000;"></div>
<div style="position:absolute;left:408px;top:105px;width:1px;height:1px;background:#000;"></div>
<div style="position:absolute;left:413px;top:105px;width:1px;height:1px;background:#000;"></div>
<div style="position:absolute;left:418px;top:105px;width:1px;height:1px;background:#000;"></div>
<div style="position:absolute;left:423px;top:105px;width:1px;height:1px;background:#000;"></div>
<div style="position:absolute;left:428px;top:104px;width:1px;height:3px;background:#000;"></div>
<div style="position:absolute;left:433px;top:105px;width:1px;height:1px;background:#000;"></div>
<div style="position:absolute;left:438px;top:105px;width:1px;height:1px;background:#000;"></div>
<div style="position:absolute;left:443px;top:105px;width:1px;height:1px;background:#000;"></div>
<div style="position:absolute;left:448px;top:105px;width:1px;height:1px;background:#000;"></div>
<div class="t" style="left:451px;top:100px;font-size:12px;font-weight:400;color:#000;letter-spacing:-0.6px;">1</div>
<div style="position:absolute;left:459px;top:105px;width:1px;height:1px;background:#000;"></div>
<div style="position:absolute;left:464px;top:105px;width:1px;height:1px;background:#000;"></div>
<div style="position:absolute;left:469px;top:105px;width:1px;height:1px;background:#000;"></div>
<div style="position:absolute;left:474px;top:105px;width:1px;height:1px;background:#000;"></div>
<div style="position:absolute;left:479px;top:104px;width:1px;height:3px;background:#000;"></div>
<div style="position:absolute;left:484px;top:105px;width:1px;height:1px;background:#000;"></div>
<div style="position:absolute;left:489px;top:105px;width:1px;height:1px;background:#000;"></div>
<div style="position:absolute;left:494px;top:105px;width:1px;height:1px;background:#000;"></div>
<div style="position:absolute;left:499px;top:105px;width:1px;height:1px;background:#000;"></div>
<div class="t" style="left:502px;top:100px;font-size:12px;font-weight:400;color:#000;letter-spacing:-0.6px;">2</div>
<div style="position:absolute;left:510px;top:105px;width:1px;height:1px;background:#000;"></div>
<div style="position:absolute;left:515px;top:105px;width:1px;height:1px;background:#000;"></div>
<div style="position:absolute;left:520px;top:105px;width:1px;height:1px;background:#000;"></div>
<div style="position:absolute;left:525px;top:105px;width:1px;height:1px;background:#000;"></div>
<div style="position:absolute;left:530px;top:104px;width:1px;height:3px;background:#000;"></div>
<div style="position:absolute;left:535px;top:105px;width:1px;height:1px;background:#000;"></div>
<div style="position:absolute;left:540px;top:105px;width:1px;height:1px;background:#000;"></div>
<div style="position:absolute;left:545px;top:105px;width:1px;height:1px;background:#000;"></div>
<div style="position:absolute;left:550px;top:105px;width:1px;height:1px;background:#000;"></div>
<div class="t" style="left:552px;top:100px;font-size:12px;font-weight:400;color:#000;letter-spacing:-0.6px;">3</div>
<div style="position:absolute;left:561px;top:105px;width:1px;height:1px;background:#000;"></div>
<div style="position:absolute;left:566px;top:105px;width:1px;height:1px;background:#000;"></div>
<div style="position:absolute;left:571px;top:105px;width:1px;height:1px;background:#000;"></div>
<div style="position:absolute;left:576px;top:105px;width:1px;height:1px;background:#000;"></div>
<div style="position:absolute;left:581px;top:104px;width:1px;height:3px;background:#000;"></div>
<div style="position:absolute;left:586px;top:105px;width:1px;height:1px;background:#000;"></div>
<div style="position:absolute;left:591px;top:105px;width:1px;height:1px;background:#000;"></div>
<div style="position:absolute;left:596px;top:105px;width:1px;height:1px;background:#000;"></div>
<div style="position:absolute;left:601px;top:105px;width:1px;height:1px;background:#000;"></div>
<div class="t" style="left:603px;top:100px;font-size:12px;font-weight:400;color:#000;letter-spacing:-0.6px;">4</div>
<div style="position:absolute;left:612px;top:105px;width:1px;height:1px;background:#000;"></div>
<div style="position:absolute;left:617px;top:105px;width:1px;height:1px;background:#000;"></div>
<div style="position:absolute;left:622px;top:105px;width:1px;height:1px;background:#000;"></div>
<div style="position:absolute;left:627px;top:105px;width:1px;height:1px;background:#000;"></div>
<div style="position:absolute;left:632px;top:104px;width:1px;height:3px;background:#000;"></div>
<div style="position:absolute;left:637px;top:105px;width:1px;height:1px;background:#000;"></div>
<div style="position:absolute;left:642px;top:105px;width:1px;height:1px;background:#000;"></div>
<div style="position:absolute;left:647px;top:105px;width:1px;height:1px;background:#000;"></div>
<div style="position:absolute;left:652px;top:105px;width:1px;height:1px;background:#000;"></div>
<div class="t" style="left:654px;top:100px;font-size:12px;font-weight:400;color:#000;letter-spacing:-0.6px;">5</div>
<div style="position:absolute;left:662px;top:105px;width:1px;height:1px;background:#000;"></div>
<div style="position:absolute;left:668px;top:105px;width:1px;height:1px;background:#000;"></div>
<div style="position:absolute;left:673px;top:105px;width:1px;height:1px;background:#000;"></div>
<div style="position:absolute;left:678px;top:105px;width:1px;height:1px;background:#000;"></div>
<div style="position:absolute;left:683px;top:104px;width:1px;height:3px;background:#000;"></div>
<div style="position:absolute;left:688px;top:105px;width:1px;height:1px;background:#000;"></div>
<div style="position:absolute;left:693px;top:105px;width:1px;height:1px;background:#000;"></div>
<div style="position:absolute;left:698px;top:105px;width:1px;height:1px;background:#000;"></div>
<div style="position:absolute;left:703px;top:105px;width:1px;height:1px;background:#000;"></div>
<div class="t" style="left:705px;top:100px;font-size:12px;font-weight:400;color:#000;letter-spacing:-0.6px;">6</div>
<div style="position:absolute;left:713px;top:105px;width:1px;height:1px;background:#000;"></div>
<div style="position:absolute;left:719px;top:105px;width:1px;height:1px;background:#000;"></div>
<div style="position:absolute;left:724px;top:105px;width:1px;height:1px;background:#000;"></div>
<div style="position:absolute;left:729px;top:105px;width:1px;height:1px;background:#000;"></div>
<div style="position:absolute;left:734px;top:104px;width:1px;height:3px;background:#000;"></div>
<div style="position:absolute;left:739px;top:105px;width:1px;height:1px;background:#000;"></div>
<div style="position:absolute;left:744px;top:105px;width:1px;height:1px;background:#000;"></div>
<div style="position:absolute;left:749px;top:105px;width:1px;height:1px;background:#000;"></div>
<div style="position:absolute;left:754px;top:105px;width:1px;height:1px;background:#000;"></div>
<div class="t" style="left:756px;top:100px;font-size:12px;font-weight:400;color:#000;letter-spacing:-0.6px;">7</div>
<div style="position:absolute;left:764px;top:105px;width:1px;height:1px;background:#000;"></div>
<div style="position:absolute;left:770px;top:105px;width:1px;height:1px;background:#000;"></div>
<div style="position:absolute;left:775px;top:105px;width:1px;height:1px;background:#000;"></div>
<div style="position:absolute;left:780px;top:105px;width:1px;height:1px;background:#000;"></div>
<div style="position:absolute;left:785px;top:104px;width:1px;height:3px;background:#000;"></div>
<div style="position:absolute;left:790px;top:105px;width:1px;height:1px;background:#000;"></div>
<div style="position:absolute;left:795px;top:105px;width:1px;height:1px;background:#000;"></div>
<div style="position:absolute;left:800px;top:105px;width:1px;height:1px;background:#000;"></div>
<div style="position:absolute;left:805px;top:105px;width:1px;height:1px;background:#000;"></div>
<div class="t" style="left:807px;top:100px;font-size:12px;font-weight:400;color:#000;letter-spacing:-0.6px;">8</div>
<div style="position:absolute;left:815px;top:105px;width:1px;height:1px;background:#000;"></div>
<div style="position:absolute;left:820px;top:105px;width:1px;height:1px;background:#000;"></div>
<div style="position:absolute;left:826px;top:105px;width:1px;height:1px;background:#000;"></div>
<div style="position:absolute;left:831px;top:105px;width:1px;height:1px;background:#000;"></div>
<div style="position:absolute;left:836px;top:104px;width:1px;height:3px;background:#000;"></div>
<div style="position:absolute;left:841px;top:105px;width:1px;height:1px;background:#000;"></div>
<div style="position:absolute;left:846px;top:105px;width:1px;height:1px;background:#000;"></div>
<div style="position:absolute;left:851px;top:105px;width:1px;height:1px;background:#000;"></div>
<div style="position:absolute;left:856px;top:105px;width:1px;height:1px;background:#000;"></div>
<div class="t" style="left:858px;top:100px;font-size:12px;font-weight:400;color:#000;letter-spacing:-0.6px;">9</div>
<div style="position:absolute;left:866px;top:105px;width:1px;height:1px;background:#000;"></div>
<div style="position:absolute;left:871px;top:105px;width:1px;height:1px;background:#000;"></div>
<div style="position:absolute;left:877px;top:105px;width:1px;height:1px;background:#000;"></div>
<div style="position:absolute;left:882px;top:105px;width:1px;height:1px;background:#000;"></div>
<div style="position:absolute;left:887px;top:104px;width:1px;height:3px;background:#000;"></div>
<div style="position:absolute;left:892px;top:105px;width:1px;height:1px;background:#000;"></div>
<div style="position:absolute;left:897px;top:105px;width:1px;height:1px;background:#000;"></div>
<div style="position:absolute;left:902px;top:105px;width:1px;height:1px;background:#000;"></div>
<div style="position:absolute;left:907px;top:105px;width:1px;height:1px;background:#000;"></div>
<div class="t" style="left:905px;top:100px;font-size:12px;font-weight:400;color:#000;letter-spacing:-0.6px;">10</div>
<div style="position:absolute;left:917px;top:105px;width:1px;height:1px;background:#000;"></div>
<div style="position:absolute;left:922px;top:105px;width:1px;height:1px;background:#000;"></div>
<div style="position:absolute;left:927px;top:105px;width:1px;height:1px;background:#000;"></div>
<div style="position:absolute;left:933px;top:105px;width:1px;height:1px;background:#000;"></div>
<div style="position:absolute;left:938px;top:104px;width:1px;height:3px;background:#000;"></div>
<div style="position:absolute;left:943px;top:105px;width:1px;height:1px;background:#000;"></div>
<div style="position:absolute;left:948px;top:105px;width:1px;height:1px;background:#000;"></div>
<div style="position:absolute;left:953px;top:105px;width:1px;height:1px;background:#000;"></div>
<div style="position:absolute;left:958px;top:105px;width:1px;height:1px;background:#000;"></div>
<div class="t" style="left:956px;top:100px;font-size:12px;font-weight:400;color:#000;letter-spacing:-0.6px;">11</div>
<div style="position:absolute;left:968px;top:105px;width:1px;height:1px;background:#000;"></div>
<div style="position:absolute;left:973px;top:105px;width:1px;height:1px;background:#000;"></div>
<div style="position:absolute;left:978px;top:105px;width:1px;height:1px;background:#000;"></div>
<div style="position:absolute;left:984px;top:105px;width:1px;height:1px;background:#000;"></div>
<div style="position:absolute;left:989px;top:104px;width:1px;height:3px;background:#000;"></div>
<div style="position:absolute;left:994px;top:105px;width:1px;height:1px;background:#000;"></div>
<div style="position:absolute;left:999px;top:105px;width:1px;height:1px;background:#000;"></div>
<div style="position:absolute;left:204px;top:119px;width:25px;height:583px;background:#c0c0c0;"></div>
<div style="position:absolute;left:228px;top:119px;width:1px;height:583px;background:#000;"></div>
<div style="position:absolute;left:207px;top:119px;width:1px;height:583px;background:#808080;"></div>
<div style="position:absolute;left:222px;top:119px;width:1px;height:583px;background:#808080;"></div>
<div style="position:absolute;left:208px;top:133px;width:14px;height:548px;background:#fff;"></div>
<div style="position:absolute;left:207px;top:132px;width:16px;height:1px;background:#808080;"></div>
<div style="position:absolute;left:207px;top:681px;width:16px;height:1px;background:#808080;"></div>
<div style="position:absolute;left:208px;top:552px;width:14px;height:1px;background:#808080;"></div>
<div style="position:absolute;left:208px;top:554px;width:14px;height:1px;background:#808080;"></div>
<div style="position:absolute;left:208px;top:246px;width:14px;height:1px;background:#808080;"></div>
<div style="position:absolute;left:208px;top:248px;width:14px;height:1px;background:#808080;"></div>
<div style="position:absolute;left:215px;top:124px;width:1px;height:1px;background:#000;"></div>
<div style="position:absolute;left:215px;top:129px;width:1px;height:1px;background:#000;"></div>
<div style="position:absolute;left:215px;top:139px;width:1px;height:1px;background:#000;"></div>
<div style="position:absolute;left:215px;top:144px;width:1px;height:1px;background:#000;"></div>
<div style="position:absolute;left:215px;top:149px;width:1px;height:1px;background:#000;"></div>
<div style="position:absolute;left:215px;top:154px;width:1px;height:1px;background:#000;"></div>
<div style="position:absolute;left:214px;top:159px;width:3px;height:1px;background:#000;"></div>
<div style="position:absolute;left:215px;top:164px;width:1px;height:1px;background:#000;"></div>
<div style="position:absolute;left:215px;top:170px;width:1px;height:1px;background:#000;"></div>
<div style="position:absolute;left:215px;top:175px;width:1px;height:1px;background:#000;"></div>
<div style="position:absolute;left:215px;top:180px;width:1px;height:1px;background:#000;"></div>
<div class="t" style="left:209px;top:188px;font-size:12px;letter-spacing:-0.6px;transform-origin:0 0;transform:rotate(-90deg);">1</div>
<div style="position:absolute;left:215px;top:190px;width:1px;height:1px;background:#000;"></div>
<div style="position:absolute;left:215px;top:195px;width:1px;height:1px;background:#000;"></div>
<div style="position:absolute;left:215px;top:200px;width:1px;height:1px;background:#000;"></div>
<div style="position:absolute;left:215px;top:205px;width:1px;height:1px;background:#000;"></div>
<div style="position:absolute;left:214px;top:210px;width:3px;height:1px;background:#000;"></div>
<div style="position:absolute;left:215px;top:215px;width:1px;height:1px;background:#000;"></div>
<div style="position:absolute;left:215px;top:220px;width:1px;height:1px;background:#000;"></div>
<div style="position:absolute;left:215px;top:225px;width:1px;height:1px;background:#000;"></div>
<div style="position:absolute;left:215px;top:230px;width:1px;height:1px;background:#000;"></div>
<div class="t" style="left:209px;top:238px;font-size:12px;letter-spacing:-0.6px;transform-origin:0 0;transform:rotate(-90deg);">2</div>
<div style="position:absolute;left:215px;top:240px;width:1px;height:1px;background:#000;"></div>
<div style="position:absolute;left:215px;top:246px;width:1px;height:1px;background:#000;"></div>
<div style="position:absolute;left:215px;top:251px;width:1px;height:1px;background:#000;"></div>
<div style="position:absolute;left:215px;top:256px;width:1px;height:1px;background:#000;"></div>
<div style="position:absolute;left:214px;top:261px;width:3px;height:1px;background:#000;"></div>
<div style="position:absolute;left:215px;top:266px;width:1px;height:1px;background:#000;"></div>
<div style="position:absolute;left:215px;top:271px;width:1px;height:1px;background:#000;"></div>
<div style="position:absolute;left:215px;top:276px;width:1px;height:1px;background:#000;"></div>
<div style="position:absolute;left:215px;top:281px;width:1px;height:1px;background:#000;"></div>
<div class="t" style="left:209px;top:289px;font-size:12px;letter-spacing:-0.6px;transform-origin:0 0;transform:rotate(-90deg);">3</div>
<div style="position:absolute;left:215px;top:291px;width:1px;height:1px;background:#000;"></div>
<div style="position:absolute;left:215px;top:296px;width:1px;height:1px;background:#000;"></div>
<div style="position:absolute;left:215px;top:301px;width:1px;height:1px;background:#000;"></div>
<div style="position:absolute;left:215px;top:306px;width:1px;height:1px;background:#000;"></div>
<div style="position:absolute;left:214px;top:311px;width:3px;height:1px;background:#000;"></div>
<div style="position:absolute;left:215px;top:316px;width:1px;height:1px;background:#000;"></div>
<div style="position:absolute;left:215px;top:321px;width:1px;height:1px;background:#000;"></div>
<div style="position:absolute;left:215px;top:327px;width:1px;height:1px;background:#000;"></div>
<div style="position:absolute;left:215px;top:332px;width:1px;height:1px;background:#000;"></div>
<div class="t" style="left:209px;top:340px;font-size:12px;letter-spacing:-0.6px;transform-origin:0 0;transform:rotate(-90deg);">4</div>
<div style="position:absolute;left:215px;top:342px;width:1px;height:1px;background:#000;"></div>
<div style="position:absolute;left:215px;top:347px;width:1px;height:1px;background:#000;"></div>
<div style="position:absolute;left:215px;top:352px;width:1px;height:1px;background:#000;"></div>
<div style="position:absolute;left:215px;top:357px;width:1px;height:1px;background:#000;"></div>
<div style="position:absolute;left:214px;top:362px;width:3px;height:1px;background:#000;"></div>
<div style="position:absolute;left:215px;top:367px;width:1px;height:1px;background:#000;"></div>
<div style="position:absolute;left:215px;top:372px;width:1px;height:1px;background:#000;"></div>
<div style="position:absolute;left:215px;top:377px;width:1px;height:1px;background:#000;"></div>
<div style="position:absolute;left:215px;top:382px;width:1px;height:1px;background:#000;"></div>
<div class="t" style="left:209px;top:390px;font-size:12px;letter-spacing:-0.6px;transform-origin:0 0;transform:rotate(-90deg);">5</div>
<div style="position:absolute;left:215px;top:392px;width:1px;height:1px;background:#000;"></div>
<div style="position:absolute;left:215px;top:397px;width:1px;height:1px;background:#000;"></div>
<div style="position:absolute;left:215px;top:402px;width:1px;height:1px;background:#000;"></div>
<div style="position:absolute;left:215px;top:408px;width:1px;height:1px;background:#000;"></div>
<div style="position:absolute;left:214px;top:413px;width:3px;height:1px;background:#000;"></div>
<div style="position:absolute;left:215px;top:418px;width:1px;height:1px;background:#000;"></div>
<div style="position:absolute;left:215px;top:423px;width:1px;height:1px;background:#000;"></div>
<div style="position:absolute;left:215px;top:428px;width:1px;height:1px;background:#000;"></div>
<div style="position:absolute;left:215px;top:433px;width:1px;height:1px;background:#000;"></div>
<div class="t" style="left:209px;top:441px;font-size:12px;letter-spacing:-0.6px;transform-origin:0 0;transform:rotate(-90deg);">6</div>
<div style="position:absolute;left:215px;top:443px;width:1px;height:1px;background:#000;"></div>
<div style="position:absolute;left:215px;top:448px;width:1px;height:1px;background:#000;"></div>
<div style="position:absolute;left:215px;top:453px;width:1px;height:1px;background:#000;"></div>
<div style="position:absolute;left:215px;top:458px;width:1px;height:1px;background:#000;"></div>
<div style="position:absolute;left:214px;top:463px;width:3px;height:1px;background:#000;"></div>
<div style="position:absolute;left:215px;top:468px;width:1px;height:1px;background:#000;"></div>
<div style="position:absolute;left:215px;top:473px;width:1px;height:1px;background:#000;"></div>
<div style="position:absolute;left:215px;top:478px;width:1px;height:1px;background:#000;"></div>
<div style="position:absolute;left:215px;top:484px;width:1px;height:1px;background:#000;"></div>
<div class="t" style="left:209px;top:492px;font-size:12px;letter-spacing:-0.6px;transform-origin:0 0;transform:rotate(-90deg);">7</div>
<div style="position:absolute;left:215px;top:494px;width:1px;height:1px;background:#000;"></div>
<div style="position:absolute;left:215px;top:499px;width:1px;height:1px;background:#000;"></div>
<div style="position:absolute;left:215px;top:504px;width:1px;height:1px;background:#000;"></div>
<div style="position:absolute;left:215px;top:509px;width:1px;height:1px;background:#000;"></div>
<div style="position:absolute;left:214px;top:514px;width:3px;height:1px;background:#000;"></div>
<div style="position:absolute;left:215px;top:519px;width:1px;height:1px;background:#000;"></div>
<div style="position:absolute;left:215px;top:524px;width:1px;height:1px;background:#000;"></div>
<div style="position:absolute;left:215px;top:529px;width:1px;height:1px;background:#000;"></div>
<div style="position:absolute;left:215px;top:534px;width:1px;height:1px;background:#000;"></div>
<div class="t" style="left:209px;top:542px;font-size:12px;letter-spacing:-0.6px;transform-origin:0 0;transform:rotate(-90deg);">8</div>
<div style="position:absolute;left:215px;top:544px;width:1px;height:1px;background:#000;"></div>
<div style="position:absolute;left:215px;top:549px;width:1px;height:1px;background:#000;"></div>
<div style="position:absolute;left:215px;top:554px;width:1px;height:1px;background:#000;"></div>
<div style="position:absolute;left:215px;top:559px;width:1px;height:1px;background:#000;"></div>
<div style="position:absolute;left:214px;top:565px;width:3px;height:1px;background:#000;"></div>
<div style="position:absolute;left:215px;top:570px;width:1px;height:1px;background:#000;"></div>
<div style="position:absolute;left:215px;top:575px;width:1px;height:1px;background:#000;"></div>
<div style="position:absolute;left:215px;top:580px;width:1px;height:1px;background:#000;"></div>
<div style="position:absolute;left:215px;top:585px;width:1px;height:1px;background:#000;"></div>
<div class="t" style="left:209px;top:593px;font-size:12px;letter-spacing:-0.6px;transform-origin:0 0;transform:rotate(-90deg);">9</div>
<div style="position:absolute;left:215px;top:595px;width:1px;height:1px;background:#000;"></div>
<div style="position:absolute;left:215px;top:600px;width:1px;height:1px;background:#000;"></div>
<div style="position:absolute;left:215px;top:605px;width:1px;height:1px;background:#000;"></div>
<div style="position:absolute;left:215px;top:610px;width:1px;height:1px;background:#000;"></div>
<div style="position:absolute;left:214px;top:615px;width:3px;height:1px;background:#000;"></div>
<div style="position:absolute;left:215px;top:620px;width:1px;height:1px;background:#000;"></div>
<div style="position:absolute;left:215px;top:625px;width:1px;height:1px;background:#000;"></div>
<div style="position:absolute;left:215px;top:630px;width:1px;height:1px;background:#000;"></div>
<div style="position:absolute;left:215px;top:635px;width:1px;height:1px;background:#000;"></div>
<div class="t" style="left:209px;top:647px;font-size:12px;letter-spacing:-0.6px;transform-origin:0 0;transform:rotate(-90deg);">10</div>
<div style="position:absolute;left:215px;top:646px;width:1px;height:1px;background:#000;"></div>
<div style="position:absolute;left:215px;top:651px;width:1px;height:1px;background:#000;"></div>
<div style="position:absolute;left:215px;top:656px;width:1px;height:1px;background:#000;"></div>
<div style="position:absolute;left:215px;top:661px;width:1px;height:1px;background:#000;"></div>
<div style="position:absolute;left:214px;top:666px;width:3px;height:1px;background:#000;"></div>
<div style="position:absolute;left:215px;top:671px;width:1px;height:1px;background:#000;"></div>
<div style="position:absolute;left:215px;top:676px;width:1px;height:1px;background:#000;"></div>
<div style="position:absolute;left:215px;top:681px;width:1px;height:1px;background:#000;"></div>
<div style="position:absolute;left:215px;top:686px;width:1px;height:1px;background:#000;"></div>
<div class="t" style="left:209px;top:698px;font-size:12px;letter-spacing:-0.6px;transform-origin:0 0;transform:rotate(-90deg);">11</div>
<div style="position:absolute;left:215px;top:696px;width:1px;height:1px;background:#000;"></div>
<div style="position:absolute;left:397px;top:127px;width:434px;height:562px;background:#fff;border-left:1px solid #000;border-top:1px solid #000;border-right:2px solid #000;border-bottom:2px solid #000;"></div>
<svg style="left:416px;top:247px" width="408" height="305" viewBox="0 0 408 305">
<defs>
<radialGradient id="gr"><stop offset="0" stop-color="#643432" stop-opacity="0.75"/><stop offset="0.55" stop-color="#643432" stop-opacity="0.5"/><stop offset="1" stop-color="#643432" stop-opacity="0"/></radialGradient>
<radialGradient id="gl"><stop offset="0" stop-color="#726060" stop-opacity="0.7"/><stop offset="0.55" stop-color="#726060" stop-opacity="0.45"/><stop offset="1" stop-color="#726060" stop-opacity="0"/></radialGradient>
<radialGradient id="gd"><stop offset="0" stop-color="#2a2525" stop-opacity="0.8"/><stop offset="0.55" stop-color="#2a2525" stop-opacity="0.5"/><stop offset="1" stop-color="#2a2525" stop-opacity="0"/></radialGradient>
<filter id="nz" filterUnits="userSpaceOnUse" x="0" y="0" width="408" height="305" color-interpolation-filters="sRGB">
<feTurbulence type="fractalNoise" baseFrequency="1.3" numOctaves="2" seed="7" result="t"/>
<feColorMatrix in="t" type="matrix" values="1 0 0 0 0  1 0 0 0 0  1 0 0 0 0  0 0 0 0 1" result="g"/>
<feComponentTransfer in="g" result="gc"><feFuncR type="linear" slope="0.72" intercept="0.14"/><feFuncG type="linear" slope="0.72" intercept="0.14"/><feFuncB type="linear" slope="0.72" intercept="0.14"/></feComponentTransfer>
<feBlend in="gc" in2="SourceGraphic" mode="hard-light"/>
</filter>

</defs>
<g filter="url(#nz)"><rect width="408" height="305" fill="#443432"/><ellipse cx="86" cy="113" rx="51" ry="94" fill="url(#gr)" opacity="0.85"/><ellipse cx="167" cy="46" rx="57" ry="51" fill="url(#gl)" opacity="0.85"/><ellipse cx="237" cy="67" rx="51" ry="51" fill="url(#gr)" opacity="0.9"/><ellipse cx="351" cy="43" rx="86" ry="68" fill="url(#gr)" opacity="1.0"/><ellipse cx="20" cy="152" rx="46" ry="60" fill="url(#gl)" opacity="0.5"/><ellipse cx="237" cy="207" rx="74" ry="73" fill="url(#gr)" opacity="1.0"/><ellipse cx="367" cy="268" rx="80" ry="64" fill="url(#gl)" opacity="0.9"/><ellipse cx="61" cy="281" rx="69" ry="43" fill="url(#gl)" opacity="0.5"/><ellipse cx="180" cy="95" rx="37" ry="32" fill="url(#gd)" opacity="0.9"/><ellipse cx="347" cy="143" rx="86" ry="111" fill="url(#gd)" opacity="1.0"/><ellipse cx="326" cy="122" rx="46" ry="51" fill="url(#gd)" opacity="0.8"/><ellipse cx="204" cy="143" rx="34" ry="34" fill="url(#gd)" opacity="0.8"/><ellipse cx="155" cy="268" rx="51" ry="64" fill="url(#gd)" opacity="1.0"/><ellipse cx="257" cy="293" rx="40" ry="30" fill="url(#gd)" opacity="0.8"/><ellipse cx="16" cy="98" rx="34" ry="43" fill="url(#gd)" opacity="0.6"/><ellipse cx="90" cy="220" rx="80" ry="21" fill="url(#gd)" opacity="0.6"/></g>
</svg>
<div style="position:absolute;left:413px;top:244px;width:7px;height:7px;background:#000;"></div>
<div style="position:absolute;left:414px;top:245px;width:5px;height:5px;background:#00b400;box-shadow:inset 1px 1px 0 #00ff00, inset -1px -1px 0 #003000;"></div>
<div style="position:absolute;left:414px;top:245px;width:1px;height:1px;background:#c8ffc8;"></div>
<div style="position:absolute;left:413px;top:396px;width:7px;height:7px;background:#000;"></div>
<div style="position:absolute;left:414px;top:397px;width:5px;height:5px;background:#00b400;box-shadow:inset 1px 1px 0 #00ff00, inset -1px -1px 0 #003000;"></div>
<div style="position:absolute;left:414px;top:397px;width:1px;height:1px;background:#c8ffc8;"></div>
<div style="position:absolute;left:413px;top:550px;width:7px;height:7px;background:#000;"></div>
<div style="position:absolute;left:414px;top:551px;width:5px;height:5px;background:#00b400;box-shadow:inset 1px 1px 0 #00ff00, inset -1px -1px 0 #003000;"></div>
<div style="position:absolute;left:414px;top:551px;width:1px;height:1px;background:#c8ffc8;"></div>
<div style="position:absolute;left:616px;top:244px;width:7px;height:7px;background:#000;"></div>
<div style="position:absolute;left:617px;top:245px;width:5px;height:5px;background:#00b400;box-shadow:inset 1px 1px 0 #00ff00, inset -1px -1px 0 #003000;"></div>
<div style="position:absolute;left:617px;top:245px;width:1px;height:1px;background:#c8ffc8;"></div>
<div style="position:absolute;left:616px;top:550px;width:7px;height:7px;background:#000;"></div>
<div style="position:absolute;left:617px;top:551px;width:5px;height:5px;background:#00b400;box-shadow:inset 1px 1px 0 #00ff00, inset -1px -1px 0 #003000;"></div>
<div style="position:absolute;left:617px;top:551px;width:1px;height:1px;background:#c8ffc8;"></div>
<div style="position:absolute;left:820px;top:244px;width:7px;height:7px;background:#000;"></div>
<div style="position:absolute;left:821px;top:245px;width:5px;height:5px;background:#00b400;box-shadow:inset 1px 1px 0 #00ff00, inset -1px -1px 0 #003000;"></div>
<div style="position:absolute;left:821px;top:245px;width:1px;height:1px;background:#c8ffc8;"></div>
<div style="position:absolute;left:820px;top:396px;width:7px;height:7px;background:#000;"></div>
<div style="position:absolute;left:821px;top:397px;width:5px;height:5px;background:#00b400;box-shadow:inset 1px 1px 0 #00ff00, inset -1px -1px 0 #003000;"></div>
<div style="position:absolute;left:821px;top:397px;width:1px;height:1px;background:#c8ffc8;"></div>
<div style="position:absolute;left:820px;top:550px;width:7px;height:7px;background:#000;"></div>
<div style="position:absolute;left:821px;top:551px;width:5px;height:5px;background:#00b400;box-shadow:inset 1px 1px 0 #00ff00, inset -1px -1px 0 #003000;"></div>
<div style="position:absolute;left:821px;top:551px;width:1px;height:1px;background:#c8ffc8;"></div>
<div style="position:absolute;left:1006px;top:94px;width:16px;height:608px;background:#cccccc;"></div>
<div style="position:absolute;left:1006px;top:94px;width:16px;height:16px;background:#c0c0c0;box-shadow:inset 1px 1px 0 #fff, inset -1px -1px 0 #000, inset -2px -2px 0 #808080;"></div>
<svg style="left:1010px;top:99px" width="7" height="4" viewBox="0 0 7 4"><path d="M3.5 0 L7 4 H0 Z" fill="#000"/></svg>
<div style="position:absolute;left:1006px;top:249px;width:16px;height:302px;background:#c0c0c0;box-shadow:inset 1px 1px 0 #dfdfdf, inset 2px 2px 0 #fff, inset -1px -1px 0 #000, inset -2px -2px 0 #808080;"></div>
<div style="position:absolute;left:1006px;top:686px;width:16px;height:16px;background:#c0c0c0;box-shadow:inset 1px 1px 0 #dfdfdf, inset 2px 2px 0 #fff, inset -1px -1px 0 #000, inset -2px -2px 0 #808080;"></div>
<svg style="left:1010px;top:692px" width="7" height="4" viewBox="0 0 7 4"><path d="M0 0 H7 L3.5 4 Z" fill="#000"/></svg>
<div style="position:absolute;left:1022px;top:92px;width:2px;height:626px;background:#c8c8c8;"></div>
<div style="position:absolute;left:204px;top:702px;width:802px;height:16px;background:#c0c0c0;"></div>
<div style="position:absolute;left:1006px;top:702px;width:16px;height:16px;background:#c0c0c0;"></div>
<div style="position:absolute;left:204px;top:717px;width:802px;height:1px;background:#000;"></div>
<div style="position:absolute;left:204px;top:702px;width:16px;height:16px;background:#c0c0c0;box-shadow:inset 1px 1px 0 #dfdfdf, inset 2px 2px 0 #fff, inset -1px -1px 0 #000, inset -2px -2px 0 #808080;"></div>
<div style="position:absolute;left:220px;top:702px;width:16px;height:16px;background:#c0c0c0;box-shadow:inset 1px 1px 0 #dfdfdf, inset 2px 2px 0 #fff, inset -1px -1px 0 #000, inset -2px -2px 0 #808080;"></div>
<div style="position:absolute;left:236px;top:702px;width:16px;height:16px;background:#c0c0c0;box-shadow:inset 1px 1px 0 #dfdfdf, inset 2px 2px 0 #fff, inset -1px -1px 0 #000, inset -2px -2px 0 #808080;"></div>
<div style="position:absolute;left:252px;top:702px;width:16px;height:16px;background:#c0c0c0;box-shadow:inset 1px 1px 0 #dfdfdf, inset 2px 2px 0 #fff, inset -1px -1px 0 #000, inset -2px -2px 0 #808080;"></div>
<svg style="left:207px;top:705px" width="11" height="10" viewBox="0 0 11 10"><path d="M2 1 V9 M3 5 L8 1 V9 Z" fill="#808080" stroke="#808080" stroke-width="1"/><path d="M4 9.5 L9 9.5" stroke="#fff"/></svg>
<svg style="left:224px;top:705px" width="9" height="10" viewBox="0 0 9 10"><path d="M2 5 L7 1 V9 Z" fill="#808080"/><path d="M7.5 2 V10" stroke="#fff"/></svg>
<svg style="left:240px;top:705px" width="9" height="10" viewBox="0 0 9 10"><path d="M7 5 L2 1 V9 Z" fill="#808080"/><path d="M2 9.5 L7 6" stroke="#fff"/></svg>
<svg style="left:255px;top:705px" width="11" height="10" viewBox="0 0 11 10"><path d="M7 5 L2 1 V9 Z M8.5 1 V9" fill="#808080" stroke="#808080" stroke-width="1"/><path d="M2 9.5 L7 6" stroke="#fff"/></svg>
<div style="position:absolute;left:268px;top:702px;width:280px;height:1px;background:#000;"></div>
<svg style="left:264px;top:701px" width="290" height="17" viewBox="0 0 290 17">
<path d="M58 1.5 L54 15.5 L110 15.5 L114 1.5 Z" fill="#c0c0c0" stroke="#000" stroke-width="1"/>
<path d="M113 1.5 L109 15.5 L210 15.5 L215 1.5 Z" fill="#c0c0c0" stroke="#000" stroke-width="1"/>
<path d="M4 1 L9 15.5 L55 15.5 L60 1" fill="#fff" stroke="#000" stroke-width="1"/>
<path d="M3.5 1.5 H60" stroke="#fff" stroke-width="1"/>
</svg>
<div class="t" style="left:278px;top:705px;font-size:11px;font-weight:700;color:#000;letter-spacing:0px;">Layout</div>
<div class="t" style="left:328px;top:705px;font-size:12px;font-weight:400;color:#000;letter-spacing:-0.5px;">Controls</div>
<div class="t" style="left:387px;top:705px;font-size:12px;font-weight:400;color:#000;letter-spacing:-0.5px;">Dimension Lines</div>
<div style="position:absolute;left:547px;top:702px;width:7px;height:16px;background:#fff;border-left:1px solid #000;border-right:1px solid #000;"></div>
<div style="position:absolute;left:548px;top:702px;width:1px;height:16px;background:#c0c0c0;"></div>
<div style="position:absolute;left:554px;top:702px;width:452px;height:16px;background:#cccccc;"></div>
<div style="position:absolute;left:554px;top:702px;width:16px;height:16px;background:#c0c0c0;box-shadow:inset 1px 1px 0 #dfdfdf, inset 2px 2px 0 #fff, inset -1px -1px 0 #000, inset -2px -2px 0 #808080;"></div>
<svg style="left:559px;top:706px" width="4" height="7" viewBox="0 0 4 7"><path d="M4 0 V7 L0 3.5 Z" fill="#000"/></svg>
<div style="position:absolute;left:656px;top:702px;width:251px;height:16px;background:#c0c0c0;box-shadow:inset 1px 1px 0 #dfdfdf, inset 2px 2px 0 #fff, inset -1px -1px 0 #000, inset -2px -2px 0 #808080;"></div>
<div style="position:absolute;left:990px;top:702px;width:16px;height:16px;background:#c0c0c0;box-shadow:inset 1px 1px 0 #dfdfdf, inset 2px 2px 0 #fff, inset -1px -1px 0 #000, inset -2px -2px 0 #808080;"></div>
<svg style="left:996px;top:706px" width="4" height="7" viewBox="0 0 4 7"><path d="M0 0 V7 L4 3.5 Z" fill="#000"/></svg>
<div style="position:absolute;left:0px;top:718px;width:1024px;height:30px;background:linear-gradient(to right,#c4c4c4 0%,#d6d6d6 35%,#e6e6e6 70%,#f4f4f4 100%);"></div>
<div style="position:absolute;left:0px;top:719px;width:674px;height:28px;background:linear-gradient(to bottom,#f6f6f6 0%,#e8e8e8 45%,#d4d4d4 100%);"></div>
<div style="position:absolute;left:0px;top:747px;width:1024px;height:1px;background:#a0a0a0;"></div>
<div style="position:absolute;left:5px;top:726px;width:2px;height:2px;background:#fff;"></div>
<div style="position:absolute;left:4px;top:725px;width:2px;height:2px;background:#000;"></div>
<div style="position:absolute;left:5px;top:726px;width:1px;height:1px;background:#707070;"></div>
<div style="position:absolute;left:5px;top:730px;width:2px;height:2px;background:#fff;"></div>
<div style="position:absolute;left:4px;top:729px;width:2px;height:2px;background:#000;"></div>
<div style="position:absolute;left:5px;top:730px;width:1px;height:1px;background:#707070;"></div>
<div style="position:absolute;left:5px;top:734px;width:2px;height:2px;background:#fff;"></div>
<div style="position:absolute;left:4px;top:733px;width:2px;height:2px;background:#000;"></div>
<div style="position:absolute;left:5px;top:734px;width:1px;height:1px;background:#707070;"></div>
<div style="position:absolute;left:5px;top:738px;width:2px;height:2px;background:#fff;"></div>
<div style="position:absolute;left:4px;top:737px;width:2px;height:2px;background:#000;"></div>
<div style="position:absolute;left:5px;top:738px;width:1px;height:1px;background:#707070;"></div>
<div style="position:absolute;left:5px;top:742px;width:2px;height:2px;background:#fff;"></div>
<div style="position:absolute;left:4px;top:741px;width:2px;height:2px;background:#000;"></div>
<div style="position:absolute;left:5px;top:742px;width:1px;height:1px;background:#707070;"></div>
<div style="position:absolute;left:12px;top:722px;width:23px;height:23px;background:#bcbcd6;border:1px solid #0a246a;"></div>
<svg style="left:16px;top:725px" width="14" height="17" viewBox="0 0 14 17"><path d="M2.5 1.5 V13.5 L5.5 10.5 L8 15.5 L10 14.5 L7.5 9.5 H11.5 Z" fill="#fff" stroke="#000" stroke-width="1"/></svg>
<div style="position:absolute;left:38px;top:726px;width:1px;height:15px;background:#808080;"></div>
<div style="position:absolute;left:39px;top:726px;width:1px;height:15px;background:#fff;"></div>
<svg style="left:46px;top:726px" width="16" height="15" viewBox="0 0 16 15"><path d="M1 14 L15 1" stroke="#4a3aa8" stroke-width="1.2"/></svg>
<svg style="left:68px;top:727px" width="18" height="11" viewBox="0 0 18 11"><rect x="1.5" y="1.5" width="15" height="8.5" fill="#8890f0" stroke="#3a30a0"/></svg>
<svg style="left:91px;top:727px" width="18" height="11" viewBox="0 0 18 11"><ellipse cx="9" cy="5.5" rx="7.5" ry="4.5" fill="#8890f0" stroke="#3a30a0"/></svg>
<svg style="left:115px;top:725px" width="17" height="17" viewBox="0 0 17 17"><text x="0.5" y="15" font-family="Liberation Serif" font-size="19" font-weight="700" fill="#4a40b0">T</text></svg>
<div style="position:absolute;left:138px;top:726px;width:1px;height:15px;background:#808080;"></div>
<div style="position:absolute;left:139px;top:726px;width:1px;height:15px;background:#fff;"></div>
<svg style="left:145px;top:725px" width="18" height="16" viewBox="0 0 18 16"><path d="M1 11 Q4 8 6 11 Q8 15 11 12 Q13 10 16 13" stroke="#4a3aa8" fill="none"/><path d="M8 10 L14 2 L16 4 L10 11 L7 12 Z" fill="#f8d838" stroke="#303030" stroke-width="0.8"/></svg>
<svg style="left:168px;top:733px" width="5" height="3"><path d="M0 0 H5 L2.5 3 Z" fill="#000"/></svg>
<svg style="left:179px;top:725px" width="17" height="16" viewBox="0 0 17 16"><path d="M3 3 L7 5 L8 11 L13 12" stroke="#3a30a0" stroke-width="1.5" fill="none"/><circle cx="3" cy="3" r="2.3" fill="#3a30a0"/><circle cx="13.5" cy="12" r="2.3" fill="#3a30a0"/></svg>
<svg style="left:202px;top:733px" width="5" height="3"><path d="M0 0 H5 L2.5 3 Z" fill="#000"/></svg>
<svg style="left:213px;top:725px" width="17" height="16" viewBox="0 0 17 16"><path d="M8 1 L15.5 8 L8 15 L0.5 8 Z" fill="none" stroke="#4a3aa8" stroke-width="1.1"/></svg>
<svg style="left:236px;top:733px" width="5" height="3"><path d="M0 0 H5 L2.5 3 Z" fill="#000"/></svg>
<svg style="left:247px;top:725px" width="18" height="17" viewBox="0 0 18 17"><circle cx="8.5" cy="8.5" r="7.5" fill="none" stroke="#5a48b8" stroke-width="1.1"/><path d="M4.5 10 Q8.5 14 12.5 10" stroke="#5a48b8" fill="none" stroke-width="1.1"/><path d="M5.5 5 L6.5 6 M11.5 5 L10.5 6" stroke="#5a48b8" stroke-width="1.1"/></svg>
<svg style="left:270px;top:733px" width="5" height="3"><path d="M0 0 H5 L2.5 3 Z" fill="#000"/></svg>
<svg style="left:281px;top:726px" width="18" height="14" viewBox="0 0 18 14"><path d="M1 7 L6 2 V5 H12 V2 L17 7 L12 12 V9 H6 V12 Z" fill="#fff" stroke="#5a48b8" stroke-width="1.1"/></svg>
<svg style="left:303px;top:733px" width="5" height="3"><path d="M0 0 H5 L2.5 3 Z" fill="#000"/></svg>
<svg style="left:316px;top:725px" width="17" height="16" viewBox="0 0 17 16"><rect x="1.5" y="1.5" width="13" height="13" fill="#a8b0f0" stroke="#4a3aa8"/><path d="M1.5 4.5 H14.5 M4.5 1.5 V14.5" stroke="#4a3aa8"/></svg>
<svg style="left:338px;top:733px" width="5" height="3"><path d="M0 0 H5 L2.5 3 Z" fill="#000"/></svg>
<svg style="left:349px;top:725px" width="18" height="17" viewBox="0 0 18 17"><path d="M4 1.5 H13 Q16.5 1.5 16.5 5 V8 Q16.5 11.5 13 11.5 H8 L2 15.5 L5 11.5 Q1.5 11.5 1.5 8 V5 Q1.5 1.5 4 1.5 Z" fill="#fff" stroke="#5a48b8" stroke-width="1.1"/></svg>
<svg style="left:372px;top:733px" width="5" height="3"><path d="M0 0 H5 L2.5 3 Z" fill="#000"/></svg>
<svg style="left:383px;top:725px" width="17" height="16" viewBox="0 0 17 16"><path d="M8.5 1 L10.5 6.5 H16 L11.5 9.5 L13.5 15 L8.5 11.5 L3.5 15 L5.5 9.5 L1 6.5 H6.5 Z" fill="#fff" stroke="#5a48b8" stroke-width="1.1"/></svg>
<svg style="left:406px;top:733px" width="5" height="3"><path d="M0 0 H5 L2.5 3 Z" fill="#000"/></svg>
<div style="position:absolute;left:418px;top:726px;width:1px;height:15px;background:#808080;"></div>
<div style="position:absolute;left:419px;top:726px;width:1px;height:15px;background:#fff;"></div>
<svg style="left:425px;top:725px" width="18" height="17" viewBox="0 0 18 17"><path d="M2.5 14.5 L2.5 7 L7 2.5 L14 2.5 L9 7.5 L14 14.5 Z" fill="none" stroke="#303060"/><g fill="#b0c0ff" stroke="#3030c0" stroke-width="0.8"><rect x="1" y="6" width="3" height="3"/><rect x="6" y="1" width="3" height="3"/><rect x="12.5" y="1" width="3" height="3"/><rect x="7.5" y="6" width="3" height="3"/><rect x="1" y="13" width="3" height="3"/><rect x="12.5" y="13" width="3" height="3"/></g></svg>
<svg style="left:450px;top:725px" width="16" height="17" viewBox="0 0 16 17"><path d="M3 13 L10 4 L13 6 L6 15 Z" fill="#f8d838" stroke="#303030" stroke-width="0.8"/><path d="M10 4 L12 1 L15 3 L13 6" fill="#f0a000" stroke="#303030" stroke-width="0.8"/><rect x="1" y="13" width="3" height="3" fill="#b0c0ff" stroke="#3030c0" stroke-width="0.8"/></svg>
<svg style="left:464px;top:720px" width="30" height="26" viewBox="0 0 30 26"><path d="M15.2 7.4 Q18 5.5 21 7 Q22 9.5 17 12.5 Q16 14 18 14.5 L23.4 14" stroke="#fff" stroke-width="2.4" fill="none" transform="translate(0.6,0.6)"/><path d="M15.2 7.4 Q18 5.5 21 7 Q22 9.5 17 12.5 Q16 14 18 14.5 L23.4 14" stroke="#6a6a6a" stroke-width="1.3" fill="none"/><path d="M8.2 13.7 L14 18.4 M11.5 18.2 L14 18.4 L14 15.6" stroke="#fff" stroke-width="2.2" fill="none" transform="translate(0.6,0.6)"/><path d="M8.2 13.7 L14 18.4 M11.5 18.2 L14 18.4 L14 15.6" stroke="#6a6a6a" stroke-width="1.4" fill="none"/></svg>
<svg style="left:464px;top:720px" width="50" height="26" viewBox="0 0 50 26"><path d="M34.4 9.4 L38.3 5.5 L40.6 11 L46.9 10.2 L43.4 14.8 L46.1 18.75 L42.2 18.75 L40 16" stroke="#3030a0" stroke-width="1.1" fill="none"/><path d="M31.25 14.5 Q32 17 33.6 18 L37.5 18.4" stroke="#e01010" stroke-width="1.5" fill="none"/><path d="M35.5 16.3 L37.8 18.4 L35.5 20.3" stroke="#e01010" stroke-width="1.5" fill="none"/></svg>
<div style="position:absolute;left:518px;top:726px;width:1px;height:15px;background:#808080;"></div>
<div style="position:absolute;left:519px;top:726px;width:1px;height:15px;background:#fff;"></div>
<svg style="left:525px;top:725px" width="18" height="17" viewBox="0 0 18 17"><path d="M9 2.8 A5.6 5.6 0 1 0 13.4 11" stroke="#4a50d8" stroke-width="2.3" fill="none"/><path d="M11.5 9.8 L16.5 9.5 L14.8 4.5 Z" fill="#4a50d8"/></svg>
<svg style="left:547px;top:733px" width="5" height="3"><path d="M0 0 H5 L2.5 3 Z" fill="#000"/></svg>
<svg style="left:559px;top:725px" width="17" height="16" viewBox="0 0 17 16"><rect x="2" y="1.5" width="14" height="13" fill="#fff" stroke="#b0b0c0"/><path d="M1.5 1 V16" stroke="#20c020" stroke-width="1.5"/><rect x="3" y="5" width="4" height="6" fill="#a0b0ff" stroke="#3030a0" stroke-width="0.8"/><path d="M15 8 H9 M11 6 L9 8 L11 10" stroke="#e02020" fill="none"/></svg>
<svg style="left:581px;top:733px" width="5" height="3"><path d="M0 0 H5 L2.5 3 Z" fill="#000"/></svg>
<svg style="left:593px;top:725px" width="18" height="17" viewBox="0 0 18 17"><rect x="9.5" y="0.5" width="7" height="6" fill="#7878f0" stroke="#000"/><rect x="0.5" y="10.5" width="7" height="6" fill="#7878f0" stroke="#000"/><rect x="3.5" y="3.5" width="10" height="10" fill="#f8e040" stroke="#000"/></svg>
<svg style="left:615px;top:733px" width="5" height="3"><path d="M0 0 H5 L2.5 3 Z" fill="#000"/></svg>
<div style="position:absolute;left:628px;top:726px;width:1px;height:15px;background:#808080;"></div>
<div style="position:absolute;left:629px;top:726px;width:1px;height:15px;background:#fff;"></div>
<svg style="left:634px;top:725px" width="19" height="17" viewBox="0 0 19 17"><rect x="1" y="1" width="6" height="6" fill="#a0a0a0"/><path d="M9 9 L11 8 H17 V15 L15 16 H9 Z" fill="#a0a0a0" stroke="#fff" stroke-width="0.8"/><path d="M2 9 V13 L5 15 M3 13 H6" stroke="#909090" stroke-width="1.2" fill="none"/></svg>
<div style="position:absolute;left:662px;top:722px;width:11px;height:21px;background:linear-gradient(to bottom,#b4b4b4,#8c8c8c);"></div>
<svg style="left:665px;top:737px" width="5" height="3" viewBox="0 0 5 3"><path d="M0 0 H5 L2.5 3 Z" fill="#000"/></svg>
<div style="position:absolute;left:0px;top:748px;width:1024px;height:20px;background:#c0c0c0;"></div>
<div style="position:absolute;left:0px;top:748px;width:1024px;height:1px;background:#fff;"></div>
<div style="position:absolute;left:5px;top:751px;width:354px;height:16px;box-shadow:inset 1px 1px 0 #808080, inset -1px -1px 0 #fff;"></div>
<div style="position:absolute;left:363px;top:751px;width:212px;height:16px;box-shadow:inset 1px 1px 0 #808080, inset -1px -1px 0 #fff;"></div>
<div style="position:absolute;left:578px;top:751px;width:40px;height:16px;box-shadow:inset 1px 1px 0 #808080, inset -1px -1px 0 #fff;"></div>
<div style="position:absolute;left:621px;top:751px;width:18px;height:16px;box-shadow:inset 1px 1px 0 #808080, inset -1px -1px 0 #fff;"></div>
<div style="position:absolute;left:641px;top:751px;width:21px;height:16px;box-shadow:inset 1px 1px 0 #808080, inset -1px -1px 0 #fff;"></div>
<div style="position:absolute;left:665px;top:751px;width:127px;height:16px;box-shadow:inset 1px 1px 0 #808080, inset -1px -1px 0 #fff;"></div>
<div style="position:absolute;left:795px;top:751px;width:224px;height:16px;box-shadow:inset 1px 1px 0 #808080, inset -1px -1px 0 #fff;"></div>
<div class="t" style="left:11px;top:754px;font-size:12px;font-weight:400;color:#000;letter-spacing:-0.55px;">Bitmap selected</div>
<div style="position:absolute;left:378px;top:757px;width:1px;height:1px;background:#000;"></div>
<div style="position:absolute;left:380px;top:757px;width:1px;height:1px;background:#000;"></div>
<div style="position:absolute;left:382px;top:757px;width:1px;height:1px;background:#000;"></div>
<div style="position:absolute;left:384px;top:757px;width:1px;height:1px;background:#000;"></div>
<div style="position:absolute;left:373px;top:763px;width:1px;height:1px;background:#000;"></div>
<div style="position:absolute;left:375px;top:763px;width:1px;height:1px;background:#000;"></div>
<div style="position:absolute;left:377px;top:763px;width:1px;height:1px;background:#000;"></div>
<div style="position:absolute;left:379px;top:763px;width:1px;height:1px;background:#000;"></div>
<div style="position:absolute;left:381px;top:763px;width:1px;height:1px;background:#000;"></div>
<div style="position:absolute;left:383px;top:763px;width:1px;height:1px;background:#000;"></div>
<div style="position:absolute;left:384px;top:757px;width:1px;height:1px;background:#000;"></div>
<div style="position:absolute;left:384px;top:759px;width:1px;height:1px;background:#000;"></div>
<div style="position:absolute;left:384px;top:761px;width:1px;height:1px;background:#000;"></div>
<div style="position:absolute;left:384px;top:763px;width:1px;height:1px;background:#000;"></div>
<div style="position:absolute;left:373px;top:762px;width:1px;height:1px;background:#000;"></div>
<div style="position:absolute;left:373px;top:753px;width:1px;height:9px;background:#0000e0;"></div>
<div style="position:absolute;left:370px;top:757px;width:8px;height:1px;background:#0000e0;"></div>
<div class="t" style="left:391px;top:754px;font-size:12px;font-weight:400;color:#000;letter-spacing:-0.45px;">0.25 / 2.25</div>
<div style="position:absolute;left:480px;top:755px;width:1px;height:1px;background:#000;"></div>
<div style="position:absolute;left:480px;top:763px;width:1px;height:1px;background:#000;"></div>
<div style="position:absolute;left:482px;top:755px;width:1px;height:1px;background:#000;"></div>
<div style="position:absolute;left:482px;top:763px;width:1px;height:1px;background:#000;"></div>
<div style="position:absolute;left:484px;top:755px;width:1px;height:1px;background:#000;"></div>
<div style="position:absolute;left:484px;top:763px;width:1px;height:1px;background:#000;"></div>
<div style="position:absolute;left:486px;top:755px;width:1px;height:1px;background:#000;"></div>
<div style="position:absolute;left:486px;top:763px;width:1px;height:1px;background:#000;"></div>
<div style="position:absolute;left:488px;top:755px;width:1px;height:1px;background:#000;"></div>
<div style="position:absolute;left:488px;top:763px;width:1px;height:1px;background:#000;"></div>
<div style="position:absolute;left:480px;top:755px;width:1px;height:1px;background:#000;"></div>
<div style="position:absolute;left:489px;top:755px;width:1px;height:1px;background:#000;"></div>
<div style="position:absolute;left:480px;top:757px;width:1px;height:1px;background:#000;"></div>
<div style="position:absolute;left:489px;top:757px;width:1px;height:1px;background:#000;"></div>
<div style="position:absolute;left:480px;top:759px;width:1px;height:1px;background:#000;"></div>
<div style="position:absolute;left:489px;top:759px;width:1px;height:1px;background:#000;"></div>
<div style="position:absolute;left:480px;top:761px;width:1px;height:1px;background:#000;"></div>
<div style="position:absolute;left:489px;top:761px;width:1px;height:1px;background:#000;"></div>
<div style="position:absolute;left:480px;top:763px;width:1px;height:1px;background:#000;"></div>
<div style="position:absolute;left:489px;top:763px;width:1px;height:1px;background:#000;"></div>
<svg style="left:480px;top:752px" width="10" height="3" viewBox="0 0 10 3"><path d="M0.5 0.5 L2.5 2.5 M2.5 0.5 L0.5 2.5 M7.5 0.5 L9.5 2.5 M9.5 0.5 L7.5 2.5" stroke="#000" stroke-width="0.9"/></svg>
<div style="position:absolute;left:476px;top:757px;width:1px;height:1px;background:#000;"></div>
<div style="position:absolute;left:475px;top:759px;width:1px;height:1px;background:#000;"></div>
<div style="position:absolute;left:476px;top:760px;width:1px;height:1px;background:#000;"></div>
<div style="position:absolute;left:475px;top:762px;width:1px;height:1px;background:#000;"></div>
<div class="t" style="left:497px;top:754px;font-size:12px;font-weight:400;color:#000;letter-spacing:-0.45px;">8.00 x 6.00</div>
<div class="t" style="left:587px;top:754px;font-size:12px;font-weight:400;color:#000;letter-spacing:-0.6px;">53%</div>
<div class="t" style="left:627px;top:753px;font-size:11px;font-weight:400;color:#000;letter-spacing:0px;">*</div>
<div class="t" style="left:670px;top:754px;font-size:12px;font-weight:400;color:#000;letter-spacing:-0.5px;">Slide 1 / 1 (Layout)</div>
<div class="t" style="left:801px;top:754px;font-size:12px;font-weight:400;color:#000;letter-spacing:-0.5px;">Default</div>
<div style="position:absolute;left:58px;top:37px;width:185px;height:276px;background:#c0c0c0;"></div>
<div style="position:absolute;left:58px;top:37px;width:184px;height:1px;background:#dfdfdf;"></div>
<div style="position:absolute;left:58px;top:37px;width:1px;height:275px;background:#dfdfdf;"></div>
<div style="position:absolute;left:59px;top:38px;width:182px;height:1px;background:#fff;"></div>
<div style="position:absolute;left:59px;top:38px;width:1px;height:273px;background:#fff;"></div>
<div style="position:absolute;left:241px;top:38px;width:1px;height:274px;background:#808080;"></div>
<div style="position:absolute;left:59px;top:311px;width:183px;height:1px;background:#808080;"></div>
<div style="position:absolute;left:242px;top:37px;width:1px;height:276px;background:#000;"></div>
<div style="position:absolute;left:58px;top:312px;width:185px;height:1px;background:#000;"></div>
<div class="t" style="left:99px;top:43px;font-size:12px;font-weight:400;color:#000;letter-spacing:-0.5px;"><span class="u">N</span>ormal</div>
<svg style="left:63px;top:47px" width="8" height="7" viewBox="0 0 8 7"><path d="M0.5 3.2 L3 5.7 L7.5 1" stroke="#000" stroke-width="1.9" fill="none" stroke-linecap="square" stroke-linejoin="miter"/></svg>
<div class="t" style="left:99px;top:63px;font-size:12px;font-weight:400;color:#000;letter-spacing:-0.5px;"><span class="u">M</span>aster</div>
<div style="position:absolute;left:62px;top:82px;width:177px;height:1px;background:#808080;"></div>
<div style="position:absolute;left:62px;top:83px;width:177px;height:1px;background:#fff;"></div>
<div class="t" style="left:99px;top:91px;font-size:12px;font-weight:400;color:#000;letter-spacing:-0.5px;"><span class="u">C</span>olor/Grayscale</div>
<svg style="left:233px;top:93px" width="4" height="7" viewBox="0 0 4 7"><path d="M0 0 L4 3.5 L0 7 Z" fill="#000"/></svg>
<div style="position:absolute;left:62px;top:110px;width:177px;height:1px;background:#808080;"></div>
<div style="position:absolute;left:62px;top:111px;width:177px;height:1px;background:#fff;"></div>
<div class="t" style="left:99px;top:119px;font-size:12px;font-weight:400;color:#000;letter-spacing:-0.5px;"><span class="u">P</span>age Pane</div>
<svg style="left:63px;top:123px" width="8" height="7" viewBox="0 0 8 7"><path d="M0.5 3.2 L3 5.7 L7.5 1" stroke="#000" stroke-width="1.9" fill="none" stroke-linecap="square" stroke-linejoin="miter"/></svg>
<div class="t" style="left:99px;top:139px;font-size:12px;font-weight:400;color:#000;letter-spacing:-0.5px;"><span class="u">T</span>oolbars</div>
<svg style="left:233px;top:141px" width="4" height="7" viewBox="0 0 4 7"><path d="M0 0 L4 3.5 L0 7 Z" fill="#000"/></svg>
<div class="t" style="left:99px;top:159px;font-size:12px;font-weight:400;color:#000;letter-spacing:-0.5px;">Status <span class="u">B</span>ar</div>
<svg style="left:63px;top:163px" width="8" height="7" viewBox="0 0 8 7"><path d="M0.5 3.2 L3 5.7 L7.5 1" stroke="#000" stroke-width="1.9" fill="none" stroke-linecap="square" stroke-linejoin="miter"/></svg>
<div class="t" style="left:99px;top:179px;font-size:12px;font-weight:400;color:#808080;letter-spacing:-0.5px;">Input Method Status</div>
<div style="position:absolute;left:133px;top:190px;width:6px;height:1px;background:#808080;"></div>
<div class="t" style="left:99px;top:199px;font-size:12px;font-weight:400;color:#000;letter-spacing:-0.5px;"><span class="u">R</span>uler</div>
<svg style="left:63px;top:203px" width="8" height="7" viewBox="0 0 8 7"><path d="M0.5 3.2 L3 5.7 L7.5 1" stroke="#000" stroke-width="1.9" fill="none" stroke-linecap="square" stroke-linejoin="miter"/></svg>
<div class="t" style="left:99px;top:219px;font-size:12px;font-weight:400;color:#000;letter-spacing:-0.5px;">Gr<span class="u">i</span>d</div>
<svg style="left:233px;top:221px" width="4" height="7" viewBox="0 0 4 7"><path d="M0 0 L4 3.5 L0 7 Z" fill="#000"/></svg>
<div class="t" style="left:99px;top:239px;font-size:12px;font-weight:400;color:#000;letter-spacing:-0.5px;"><span class="u">G</span>uides</div>
<svg style="left:233px;top:241px" width="4" height="7" viewBox="0 0 4 7"><path d="M0 0 L4 3.5 L0 7 Z" fill="#000"/></svg>
<div style="position:absolute;left:62px;top:258px;width:177px;height:1px;background:#808080;"></div>
<div style="position:absolute;left:62px;top:259px;width:177px;height:1px;background:#fff;"></div>
<div class="t" style="left:99px;top:267px;font-size:12px;font-weight:400;color:#000;letter-spacing:-0.5px;">Pre<span class="u">v</span>iew</div>
<div style="position:absolute;left:62px;top:286px;width:177px;height:1px;background:#808080;"></div>
<div style="position:absolute;left:62px;top:287px;width:177px;height:1px;background:#fff;"></div>
<div class="t" style="left:99px;top:295px;font-size:12px;font-weight:400;color:#000;letter-spacing:-0.5px;"><span class="u">Z</span>oom...</div>
<svg style="left:75px;top:292px" width="18" height="18" viewBox="0 0 18 18"><path d="M10 10 L16 16" stroke="#303030" stroke-width="3.2" stroke-linecap="round"/><path d="M10.5 10.5 L15.5 15.5" stroke="#f0c050" stroke-width="1.6" stroke-linecap="round"/><circle cx="6.5" cy="6.5" r="5.5" fill="#d8e0ff" stroke="#505870" stroke-width="1.1"/><path d="M3.5 6 Q4 3.5 6.5 3.2" stroke="#fff" stroke-width="1.2" fill="none"/></svg>
</body></html>
